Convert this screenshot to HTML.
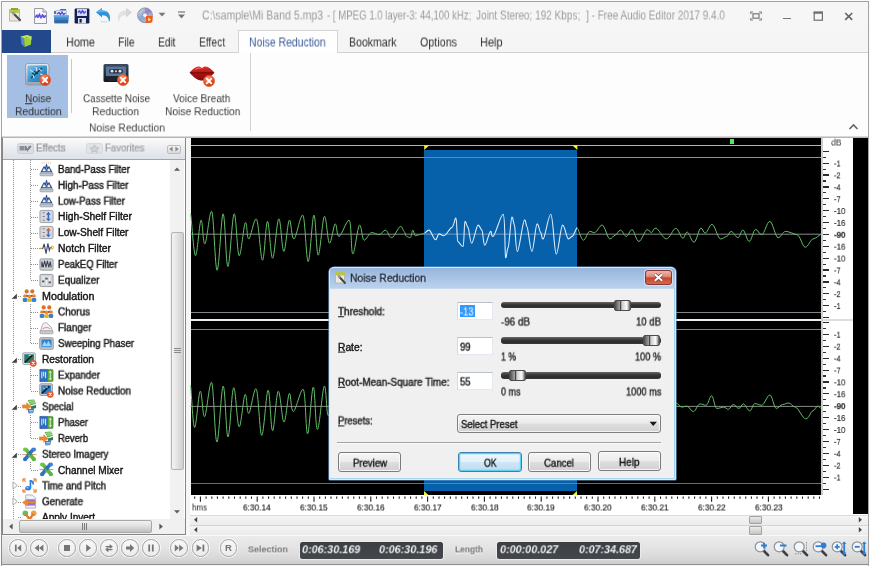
<!DOCTYPE html>
<html><head><meta charset="utf-8"><title>Free Audio Editor</title>
<style>
html,body{margin:0;padding:0;}
body{width:870px;height:566px;overflow:hidden;background:#fff;position:relative;font-family:"Liberation Sans",sans-serif;}
#root{position:absolute;left:0;top:0;width:870px;height:566px;overflow:hidden;}
#root div,#root span.t,#root svg{position:absolute;}
#root div{box-sizing:border-box;}
span.t{white-space:nowrap;transform-origin:0 50%;display:block;}
u{text-decoration:underline;text-underline-offset:1px;}
</style></head><body><div id="root">
<div style="left:0px;top:0px;width:870px;height:30px;background:#f6f6f6;"></div>
<div style="left:0px;top:30px;width:870px;height:23px;background:#f5f5f5;border-bottom:1px solid #d0d0d0;"></div>
<div style="left:0px;top:53px;width:870px;height:83px;background:#fdfdfd;"></div>
<div style="left:0px;top:135.6px;width:870px;height:2.4px;background:linear-gradient(#ececec,#c4c4c4 50%,#a8a8a8);z-index:3;"></div>
<div style="left:1px;top:1px;width:868px;height:566px;border:1px solid #a3a3a3;border-bottom:none;z-index:50;pointer-events:none;"></div>
<div style="left:869px;top:0px;width:1px;height:566px;background:#fbfbfb;z-index:51;"></div>
<div style="left:0px;top:0px;width:870px;height:1px;background:#fbfbfb;z-index:51;"></div>
<div style="left:0px;top:0px;width:1px;height:566px;background:#fbfbfb;z-index:51;"></div>
<svg style="left:7px;top:7px" width="16" height="16" viewBox="0 0 16 16">
<rect x="2.5" y="3" width="10" height="11" fill="#e9e6dc" stroke="#b9b7ae" stroke-width="1"/>
<rect x="2" y="2" width="11" height="4" rx="1" fill="#b9c84a"/>
<rect x="4" y="1" width="7" height="2" fill="#8aa838"/>
<path d="M6 6 L13 13" stroke="#4a4a55" stroke-width="2.2" stroke-linecap="round"/>
<path d="M5 5 L7.5 7.5" stroke="#9aa0a8" stroke-width="2"/>
</svg>
<svg style="left:33px;top:8px" width="15" height="16" viewBox="0 0 15 16">
<path d="M1.5 0.5 H10 L13.5 4 V15.5 H1.5 Z" fill="#f7f7f9" stroke="#9a9aa6" stroke-width="1"/>
<path d="M10 0.5 V4 H13.5" fill="#dcdce4" stroke="#9a9aa6" stroke-width="1"/>
<path d="M2.5 8 L4 6.5 L5 8.5 L6.5 5.5 L8 9 L9.5 6 L11 8.5 L12.5 7 L12.5 9 L11 10 L9.5 8.5 L8 10.5 L6.5 8 L5 10 L4 8.5 L2.5 9.5Z" fill="#4a48d8" stroke="#5a4fe0" stroke-width="0.8"/>
</svg>
<svg style="left:53px;top:8px" width="17" height="16" viewBox="0 0 17 16">
<path d="M1 3 H6 L7.5 1 H13 V6 H1Z" fill="#3d6ea8"/>
<rect x="3" y="2.5" width="10.5" height="7" fill="#e8eef8" stroke="#9ab0d0" stroke-width="0.6"/>
<path d="M4 6 L6 4.5 L7.5 6.5 L9 4 L10.5 6.5 L12.5 5" stroke="#4a48d8" stroke-width="1.3" fill="none"/>
<path d="M0.8 7.5 H16 L15 15.2 H1.5 Z" fill="#3f83c4"/>
<path d="M0.8 7.5 H16 L15.8 9.5 H1 Z" fill="#62a4dc"/>
<path d="M1.3 12 H15.4 L15 15.2 H1.5Z" fill="#2f6aa8"/>
</svg>
<svg style="left:74px;top:8px" width="16" height="16" viewBox="0 0 16 16">
<rect x="0.6" y="0.6" width="14.8" height="14.8" rx="1.2" fill="#16204e"/>
<rect x="3" y="1" width="10" height="7" fill="#cfd8f4"/>
<path d="M4 4.5 L5.5 3 L7 5 L8.5 2.8 L10 5 L12 3.5" stroke="#4a48d8" stroke-width="1.4" fill="none"/>
<rect x="4" y="10" width="8" height="5.4" fill="#dfe3ee"/>
<rect x="5.5" y="11" width="2.2" height="3.6" fill="#16204e"/>
</svg>
<svg style="left:95px;top:7px" width="17" height="16" viewBox="0 0 17 16">
<path d="M1 5.2 L7 1 V3.6 C12.5 3.2 15.5 7 15 12.5 C14.8 13.8 14.3 14.6 13.8 15 C14 11 12 8 7 8.2 V10.4 Z" fill="#2f93dc"/>
<path d="M1 5.2 L7 1 V3.6 C10 3.4 12.4 4.4 13.8 6.4 C11.5 5 9 5 7 5.2 Z" fill="#58b0ee"/>
<path d="M5.5 14.8 H12" stroke="#c9d3dd" stroke-width="1"/>
</svg>
<svg style="left:116px;top:7px" width="17" height="16" viewBox="0 0 17 16">
<path d="M16 5.2 L10 1 V3.6 C4.5 3.2 1.5 7 2 12.5 C2.2 13.8 2.7 14.6 3.2 15 C3 11 5 8 10 8.2 V10.4 Z" fill="#e1e1e1"/>
<path d="M16 5.2 L10 1 V3.6 L10 8.2 V10.4 Z" fill="#d6d6d6"/>
</svg>
<svg style="left:137px;top:7px" width="17" height="17" viewBox="0 0 17 17">
<defs><linearGradient id="cdg" x1="0" y1="0" x2="1" y2="1"><stop offset="0" stop-color="#dfe6f2"/><stop offset="0.45" stop-color="#8fa6c8"/><stop offset="1" stop-color="#c9b6d8"/></linearGradient></defs>
<circle cx="8" cy="8.3" r="7.4" fill="url(#cdg)" stroke="#6f86ac" stroke-width="0.8"/>
<path d="M8 8.3 L8 0.9 A7.4 7.4 0 0 1 14.6 5 Z" fill="#a77ab8" opacity="0.75"/>
<circle cx="8" cy="8.3" r="2.3" fill="#f4f6fa" stroke="#7f92b4" stroke-width="0.7"/>
<path d="M9 9 H15.6 V13 A3 3 0 0 1 12.6 16 H9 Z" fill="#e8601c"/>
<path d="M11.2 10.6 L14 12.5 L11.2 14.4Z" fill="#ffd9b8"/>
</svg>
<svg style="left:158px;top:12px" width="9" height="6"><path d="M0.5 0.8 H7.5 L4 4.6Z" fill="#777"/></svg>
<svg style="left:177px;top:11px" width="9" height="9"><path d="M1 1 H8" stroke="#777" stroke-width="1.2"/><path d="M1 3.6 H8 L4.5 7.4Z" fill="#777"/></svg>
<span class="t" style="left:202.00px;top:8px;font-size:12px;line-height:14px;color:#9c9c9c;transform:translateY(0.50px) scaleX(0.8764);will-change:transform;">C:\sample\Mi Band 5.mp3</span>
<span class="t" style="left:326.70px;top:8px;font-size:12px;line-height:14px;color:#9c9c9c;transform:translateY(0.50px) scaleX(0.8013);will-change:transform;">- [ MPEG 1.0 layer-3: 44,100 kHz;</span>
<span class="t" style="left:475.80px;top:8px;font-size:12px;line-height:14px;color:#9c9c9c;transform:translateY(0.50px) scaleX(0.8353);will-change:transform;">Joint Stereo; 192 Kbps;</span>
<span class="t" style="left:586.00px;top:8px;font-size:12px;line-height:14px;color:#9c9c9c;transform:translateY(0.50px) scaleX(0.8335);will-change:transform;">] - Free Audio Editor 2017 9.4.0</span>
<svg style="left:750px;top:10.5px" width="12" height="10" viewBox="0 0 12 10">
<rect x="3" y="2.8" width="6" height="4.4" fill="none" stroke="#808080" stroke-width="1.3"/>
<path d="M0.8 3 V1 H3 M9 1 H11.2 V3 M11.2 7 V9 H9 M3 9 H0.8 V7" fill="none" stroke="#808080" stroke-width="1.2"/>
</svg>
<div style="left:783px;top:17.5px;width:8.4px;height:1.7px;background:#787878;"></div>
<svg style="left:812.5px;top:10.5px" width="11" height="11"><rect x="1.2" y="1.2" width="8.2" height="8" fill="none" stroke="#707070" stroke-width="1.2"/><rect x="0.6" y="0.6" width="9.4" height="2.2" fill="#707070"/></svg>
<svg style="left:843.5px;top:11.5px" width="10" height="9"><path d="M1.2 1 L8.2 7.8 M8.2 1 L1.2 7.8" stroke="#666" stroke-width="1.7"/></svg>
<div style="left:1px;top:30px;width:50px;height:23px;background:#23488c;"></div>
<svg style="left:19px;top:34px" width="15" height="15" viewBox="0 0 15 15">
<path d="M1.5 2.5 L5 4.2 V12.5 L2.5 10 Z" fill="#4f8fd0"/>
<path d="M1.5 2.5 L8 1 L12.5 2.2 L5 4.2 Z" fill="#c7e66a"/>
<path d="M5 4.2 L12.5 2.2 L12 10.5 L5.5 13 Z" fill="#9fd23a"/>
<path d="M8.5 3.3 L12.5 2.2 L12.3 6 Z" fill="#c2e860"/>
</svg>
<span class="t" style="left:66.00px;top:35px;font-size:12px;line-height:14px;color:#2e2e2e;transform:translateY(0.50px) scaleX(0.9060);will-change:transform;">Home</span>
<span class="t" style="left:118.00px;top:35px;font-size:12px;line-height:14px;color:#2e2e2e;transform:translateY(0.50px) scaleX(0.8534);will-change:transform;">File</span>
<span class="t" style="left:158.00px;top:35px;font-size:12px;line-height:14px;color:#2e2e2e;transform:translateY(0.50px) scaleX(0.8463);will-change:transform;">Edit</span>
<span class="t" style="left:199.00px;top:35px;font-size:12px;line-height:14px;color:#2e2e2e;transform:translateY(0.50px) scaleX(0.8535);will-change:transform;">Effect</span>
<span class="t" style="left:349.00px;top:35px;font-size:12px;line-height:14px;color:#2e2e2e;transform:translateY(0.50px) scaleX(0.8793);will-change:transform;">Bookmark</span>
<span class="t" style="left:420.00px;top:35px;font-size:12px;line-height:14px;color:#2e2e2e;transform:translateY(0.50px) scaleX(0.8947);will-change:transform;">Options</span>
<span class="t" style="left:480.00px;top:35px;font-size:12px;line-height:14px;color:#2e2e2e;transform:translateY(0.50px) scaleX(0.9117);will-change:transform;">Help</span>
<div style="left:238px;top:30px;width:100px;height:23px;background:#fefefe;border:1px solid #d4d4d4;border-bottom:none;"></div>
<span class="t" style="left:249.00px;top:35px;font-size:12px;line-height:14px;color:#3a5c9a;transform:translateY(0.50px) scaleX(0.8689);will-change:transform;">Noise Reduction</span>
<div style="left:7px;top:55px;width:61.2px;height:63.3px;background:#a4bee4;"></div>
<div style="left:71px;top:59px;width:1px;height:54px;background:#c9c9c9;"></div>
<div style="left:250px;top:53px;width:1px;height:78px;background:#d2d2d2;"></div>
<svg style="left:24.2px;top:61.5px" width="27" height="25" viewBox="0 0 27 25">
<defs><linearGradient id="nrf" x1="0" y1="0" x2="0" y2="1"><stop offset="0" stop-color="#e6e9ec"/><stop offset="1" stop-color="#9aa3ad"/></linearGradient>
<linearGradient id="nri" x1="0" y1="0" x2="1" y2="1"><stop offset="0" stop-color="#7cc4ea"/><stop offset="0.5" stop-color="#3a96cf"/><stop offset="1" stop-color="#1f6fae"/></linearGradient></defs>
<rect x="1.5" y="1.5" width="23.5" height="21.5" rx="2.5" fill="url(#nrf)" stroke="#8d96a0" stroke-width="0.8"/>
<rect x="3.5" y="3.5" width="19.5" height="16.5" rx="1" fill="url(#nri)"/>
<path d="M7 16 L18 6" stroke="#1f3d55" stroke-width="1.6"/>
<path d="M6 8 L9 10 M12 5 L13 9 M16 12 L19 13 M9 13 L10 16 M15 7 L18 9" stroke="#d6ecf8" stroke-width="1"/>
<path d="M10 9 L14 12 M8 11 l2 1" stroke="#123" stroke-width="0.9"/>
</svg>
<svg style="left:37.8px;top:73.3px" width="14" height="14" viewBox="-7 -7 14 14">
<defs><radialGradient id="rg44" cx="0.4" cy="0.3" r="0.8"><stop offset="0" stop-color="#ff9a70"/><stop offset="0.6" stop-color="#e8491f"/><stop offset="1" stop-color="#c23612"/></radialGradient></defs>
<circle r="5.6" fill="url(#rg44)" stroke="#d8602f" stroke-width="0.6"/>
<path d="M-2.3 -2.3 L2.3 2.3 M2.3 -2.3 L-2.3 2.3" stroke="#fff" stroke-width="1.9" stroke-linecap="round"/>
</svg>
<svg style="left:103px;top:63px" width="26" height="20" viewBox="0 0 26 20">
<defs><linearGradient id="cs" x1="0" y1="0" x2="0" y2="1"><stop offset="0" stop-color="#3b4a5e"/><stop offset="1" stop-color="#10151d"/></linearGradient></defs>
<rect x="0.5" y="1" width="25" height="18" rx="1.5" fill="url(#cs)"/>
<rect x="3" y="3.5" width="20" height="9.5" fill="#5f7796"/>
<rect x="6" y="6" width="14" height="4.5" rx="2" fill="#2b3850"/>
<circle cx="9" cy="8.2" r="1.4" fill="#dfe8f2"/><circle cx="13" cy="8.2" r="1" fill="#cfd8e4"/><circle cx="17" cy="8.2" r="1.4" fill="#dfe8f2"/>
<rect x="5" y="15" width="16" height="3" fill="#1c2430"/>
</svg>
<svg style="left:116.2px;top:72.9px" width="14" height="14" viewBox="-7 -7 14 14">
<defs><radialGradient id="rg123" cx="0.4" cy="0.3" r="0.8"><stop offset="0" stop-color="#ff9a70"/><stop offset="0.6" stop-color="#e8491f"/><stop offset="1" stop-color="#c23612"/></radialGradient></defs>
<circle r="5.6" fill="url(#rg123)" stroke="#d8602f" stroke-width="0.6"/>
<path d="M-2.3 -2.3 L2.3 2.3 M2.3 -2.3 L-2.3 2.3" stroke="#fff" stroke-width="1.9" stroke-linecap="round"/>
</svg>
<svg style="left:189px;top:65px" width="26" height="17" viewBox="0 0 26 17">
<defs><linearGradient id="lp" x1="0" y1="0" x2="0" y2="1"><stop offset="0" stop-color="#e0362c"/><stop offset="0.5" stop-color="#b01212"/><stop offset="1" stop-color="#7c0a0a"/></linearGradient></defs>
<path d="M0.5 7.5 C4 4 7 1 10 1.5 C11.5 1.8 12.3 2.8 13 3.2 C13.7 2.8 14.5 1.8 16 1.5 C19 1 22 4 25.5 7.5 C21 13 17 15.5 13 15.5 C9 15.5 5 13 0.5 7.5Z" fill="url(#lp)"/>
<path d="M1.5 7.6 C6 8.6 10 7.4 13 8 C16 7.4 20 8.6 24.5 7.6" stroke="#5a0606" stroke-width="1" fill="none"/>
<path d="M6 4.5 C8 3 10 2.8 11.5 3.5" stroke="#ff8a80" stroke-width="1" fill="none" opacity="0.8"/>
</svg>
<svg style="left:201.6px;top:73.5px" width="14" height="14" viewBox="-7 -7 14 14">
<defs><radialGradient id="rg208" cx="0.4" cy="0.3" r="0.8"><stop offset="0" stop-color="#ff9a70"/><stop offset="0.6" stop-color="#e8491f"/><stop offset="1" stop-color="#c23612"/></radialGradient></defs>
<circle r="5.6" fill="url(#rg208)" stroke="#d8602f" stroke-width="0.6"/>
<path d="M-2.3 -2.3 L2.3 2.3 M2.3 -2.3 L-2.3 2.3" stroke="#fff" stroke-width="1.9" stroke-linecap="round"/>
</svg>
<span class="t" style="left:24.90px;top:92px;font-size:11.5px;line-height:13.5px;color:#303030;transform:translateY(0.25px) scaleX(0.8912);will-change:transform;"><u>N</u>oise</span>
<span class="t" style="left:14.70px;top:105px;font-size:11.5px;line-height:13.5px;color:#303030;transform:translateY(0.25px) scaleX(0.8980);will-change:transform;">Reduction</span>
<span class="t" style="left:82.80px;top:92px;font-size:11.5px;line-height:13.5px;color:#3c3c3c;transform:translateY(0.25px) scaleX(0.8618);will-change:transform;">Cassette Noise</span>
<span class="t" style="left:92.30px;top:105px;font-size:11.5px;line-height:13.5px;color:#3c3c3c;transform:translateY(0.25px) scaleX(0.9077);will-change:transform;">Reduction</span>
<span class="t" style="left:173.00px;top:92px;font-size:11.5px;line-height:13.5px;color:#3c3c3c;transform:translateY(0.25px) scaleX(0.8803);will-change:transform;">Voice Breath</span>
<span class="t" style="left:164.60px;top:105px;font-size:11.5px;line-height:13.5px;color:#3c3c3c;transform:translateY(0.25px) scaleX(0.8936);will-change:transform;">Noise Reduction</span>
<span class="t" style="left:88.60px;top:121px;font-size:11.5px;line-height:13.5px;color:#444444;transform:translateY(0.45px) scaleX(0.9007);will-change:transform;">Noise Reduction</span>
<svg style="left:848px;top:123px" width="11" height="8"><path d="M1.5 6 L5.5 2 L9.5 6" stroke="#666" stroke-width="1.6" fill="none"/></svg>
<div style="left:0px;top:137px;width:191px;height:400px;background:#f6f6f6;"></div>
<div style="left:2px;top:137px;width:184px;height:398px;background:#fff;border:1px solid #868686;border-top-color:#a2a2a2;"></div>
<div style="left:3px;top:138px;width:182px;height:22px;background:linear-gradient(#fbfbfc,#eceef2 45%,#dde1e8);border-bottom:1px solid #a4a4a4;"></div>
<svg style="left:17px;top:143px" width="17" height="11" viewBox="0 0 17 11">
<rect x="0.5" y="0.5" width="16" height="10" rx="2" fill="#dadde2" stroke="#c6c9cf" stroke-width="0.8"/>
<rect x="2.5" y="3" width="5" height="4.5" fill="#8d9197"/>
<path d="M8.5 7.5 V3 L10.5 7.5 L12.5 3 V5 L14 3" stroke="#7d8188" stroke-width="1.3" fill="none"/>
</svg>
<span class="t" style="left:35.50px;top:142px;font-size:10px;line-height:12px;color:#8e8e8e;transform:translateY(0.50px) scaleX(0.9709);will-change:transform;-webkit-text-stroke:0.2px #8e8e8e;">Effects</span>
<svg style="left:86px;top:143px" width="17" height="11" viewBox="0 0 17 11">
<rect x="0.5" y="0.5" width="16" height="10" rx="2" fill="#e1e3e7" stroke="#d2d4d9" stroke-width="0.8"/>
<path d="M8.5 1.8 L10 4.6 L13 5 L10.8 7 L11.4 9.6 L8.5 8.2 L5.6 9.6 L6.2 7 L4 5 L7 4.6Z" fill="#cfd2d7" stroke="#b4b7bd" stroke-width="0.7"/>
</svg>
<span class="t" style="left:104.50px;top:142px;font-size:10px;line-height:12px;color:#9c9c9c;transform:translateY(0.50px) scaleX(0.9606);will-change:transform;-webkit-text-stroke:0.2px #9c9c9c;">Favorites</span>
<div style="left:167px;top:144.5px;width:14px;height:9px;background:linear-gradient(#f4f4f4,#d9d9d9);border:1px solid #bdbdbd;border-radius:2px;"></div>
<svg style="left:168px;top:146px" width="12" height="6"><path d="M4.6 0.4 V5.6 L1.2 3Z M7.4 0.4 V5.6 L10.8 3Z" fill="#8a8a8a"/></svg>
<div style="left:170px;top:160px;width:14px;height:359px;background:#f1f1f1;"></div>
<svg style="left:173px;top:166px" width="8" height="6"><path d="M1 4.8 H7 L4 1.4Z" fill="#5c5c5c"/></svg>
<svg style="left:173px;top:509px" width="8" height="6"><path d="M1 1.2 H7 L4 4.6Z" fill="#5c5c5c"/></svg>
<div style="left:171px;top:232px;width:13px;height:238px;background:linear-gradient(90deg,#f4f4f4,#e2e2e2 50%,#cfcfcf);border:1px solid #b3b3b3;border-radius:2px;"></div>
<div style="left:174px;top:348px;width:7px;height:1px;background:#8a8a8a;"></div>
<div style="left:174px;top:350px;width:7px;height:1px;background:#8a8a8a;"></div>
<div style="left:174px;top:352px;width:7px;height:1px;background:#8a8a8a;"></div>
<div style="left:3px;top:160px;width:167px;height:359px;overflow:hidden;">
<div style="left:10px;top:0px;width:1px;height:132px;background:repeating-linear-gradient(#909090 0,#909090 1px,transparent 1px,transparent 2px);"></div>
<div style="left:10px;top:141px;width:1px;height:54px;background:repeating-linear-gradient(#909090 0,#909090 1px,transparent 1px,transparent 2px);"></div>
<div style="left:10px;top:204px;width:1px;height:38px;background:repeating-linear-gradient(#909090 0,#909090 1px,transparent 1px,transparent 2px);"></div>
<div style="left:10px;top:251px;width:1px;height:39px;background:repeating-linear-gradient(#909090 0,#909090 1px,transparent 1px,transparent 2px);"></div>
<div style="left:10px;top:299px;width:1px;height:22px;background:repeating-linear-gradient(#909090 0,#909090 1px,transparent 1px,transparent 2px);"></div>
<div style="left:10px;top:330px;width:1px;height:7px;background:repeating-linear-gradient(#909090 0,#909090 1px,transparent 1px,transparent 2px);"></div>
<div style="left:10px;top:346px;width:1px;height:14px;background:repeating-linear-gradient(#909090 0,#909090 1px,transparent 1px,transparent 2px);"></div>
<div style="left:27px;top:0px;width:1px;height:120.04000000000002px;background:repeating-linear-gradient(#909090 0,#909090 1px,transparent 1px,transparent 2px);"></div>
<div style="left:27px;top:143.86px;width:1px;height:39.460000000000036px;background:repeating-linear-gradient(#909090 0,#909090 1px,transparent 1px,transparent 2px);"></div>
<div style="left:27px;top:207.14px;width:1px;height:23.640000000000043px;background:repeating-linear-gradient(#909090 0,#909090 1px,transparent 1px,transparent 2px);"></div>
<div style="left:27px;top:254.60000000000002px;width:1px;height:23.639999999999986px;background:repeating-linear-gradient(#909090 0,#909090 1px,transparent 1px,transparent 2px);"></div>
<div style="left:27px;top:302.06px;width:1px;height:7.819999999999993px;background:repeating-linear-gradient(#909090 0,#909090 1px,transparent 1px,transparent 2px);"></div>
<div style="left:28px;top:9px;width:8px;height:1px;background:repeating-linear-gradient(90deg,#909090 0,#909090 1px,transparent 1px,transparent 2px);"></div>
<svg style="left:36.0px;top:1.8px" width="15" height="15" viewBox="0 0 16 16"><path d="M1 13 L3 9 H13 L15 13 Z" fill="#dcdee2" stroke="#8f939a" stroke-width="0.8"/>
<rect x="1" y="12" width="14" height="2.8" rx="1.2" fill="#c3c6cc" stroke="#8f939a" stroke-width="0.6"/>
<path d="M2.6 10.4 L5.4 5 L6.8 7.6 L8 2.6 L9.2 7.6 L10.6 5 L13.4 10.4 Z" fill="#f2f5fa" stroke="#2f4c86" stroke-width="1.15" stroke-linejoin="round"/>
<path d="M6.4 10 L8 6.2 L9.6 10Z" fill="#4a74ba"/><path d="M3 1 H13" stroke="#e8a070" stroke-width="0.8" stroke-dasharray="1.2 1"/></svg>
<span class="t" style="left:55.00px;top:4px;font-size:10px;line-height:12px;color:#161616;transform:translateY(0.00px) scaleX(0.9741);will-change:transform;-webkit-text-stroke:0.4px #161616;">Band-Pass Filter</span>
<div style="left:28px;top:25px;width:8px;height:1px;background:repeating-linear-gradient(90deg,#909090 0,#909090 1px,transparent 1px,transparent 2px);"></div>
<svg style="left:36.0px;top:17.6px" width="15" height="15" viewBox="0 0 16 16"><path d="M1 13 L3 9 H13 L15 13 Z" fill="#dcdee2" stroke="#8f939a" stroke-width="0.8"/>
<rect x="1" y="12" width="14" height="2.8" rx="1.2" fill="#c3c6cc" stroke="#8f939a" stroke-width="0.6"/>
<path d="M2.6 10.4 L5.4 5 L6.8 7.6 L8 2.6 L9.2 7.6 L10.6 5 L13.4 10.4 Z" fill="#f2f5fa" stroke="#2f4c86" stroke-width="1.15" stroke-linejoin="round"/>
<path d="M6.4 10 L8 6.2 L9.6 10Z" fill="#4a74ba"/></svg>
<span class="t" style="left:55.00px;top:19px;font-size:10px;line-height:12px;color:#161616;transform:translateY(0.82px) scaleX(0.9912);will-change:transform;-webkit-text-stroke:0.4px #161616;">High-Pass Filter</span>
<div style="left:28px;top:41px;width:8px;height:1px;background:repeating-linear-gradient(90deg,#909090 0,#909090 1px,transparent 1px,transparent 2px);"></div>
<svg style="left:36.0px;top:33.4px" width="15" height="15" viewBox="0 0 16 16"><path d="M1 13 L3 9 H13 L15 13 Z" fill="#dcdee2" stroke="#8f939a" stroke-width="0.8"/>
<rect x="1" y="12" width="14" height="2.8" rx="1.2" fill="#c3c6cc" stroke="#8f939a" stroke-width="0.6"/>
<path d="M2.6 10.4 L5.4 5 L6.8 7.6 L8 2.6 L9.2 7.6 L10.6 5 L13.4 10.4 Z" fill="#f2f5fa" stroke="#2f4c86" stroke-width="1.15" stroke-linejoin="round"/>
<path d="M6.4 10 L8 6.2 L9.6 10Z" fill="#4a74ba"/></svg>
<span class="t" style="left:55.00px;top:35px;font-size:10px;line-height:12px;color:#161616;transform:translateY(0.64px) scaleX(0.9724);will-change:transform;-webkit-text-stroke:0.4px #161616;">Low-Pass Filter</span>
<div style="left:28px;top:57px;width:8px;height:1px;background:repeating-linear-gradient(90deg,#909090 0,#909090 1px,transparent 1px,transparent 2px);"></div>
<svg style="left:36.0px;top:49.3px" width="15" height="15" viewBox="0 0 16 16"><rect x="1" y="1.5" width="14" height="13" rx="1.5" fill="#d7d9dd" stroke="#90949b" stroke-width="0.9"/>
<path d="M4 4 H6 M4 8 H6 M4 12 H6" stroke="#6c7078" stroke-width="1"/>
<path d="M10 3 L12.5 6 H7.5Z" fill="#2b62c4"/><path d="M10 13 L12.5 10 H7.5Z" fill="#2b62c4"/><rect x="9.2" y="6" width="1.6" height="4" fill="#2b62c4"/></svg>
<span class="t" style="left:55.00px;top:51px;font-size:10px;line-height:12px;color:#161616;transform:translateY(0.46px) scaleX(1.0323);will-change:transform;-webkit-text-stroke:0.4px #161616;">High-Shelf Filter</span>
<div style="left:28px;top:73px;width:8px;height:1px;background:repeating-linear-gradient(90deg,#909090 0,#909090 1px,transparent 1px,transparent 2px);"></div>
<svg style="left:36.0px;top:65.1px" width="15" height="15" viewBox="0 0 16 16"><rect x="1" y="1.5" width="14" height="13" rx="1.5" fill="#d7d9dd" stroke="#90949b" stroke-width="0.9"/>
<path d="M4 4 H6 M4 8 H6 M4 12 H6" stroke="#6c7078" stroke-width="1"/>
<path d="M10 3 L12.5 6 H7.5Z" fill="#d85a28"/><path d="M10 13 L12.5 10 H7.5Z" fill="#2b62c4"/><rect x="9.2" y="6" width="1.6" height="4" fill="#4d6fb0"/></svg>
<span class="t" style="left:55.00px;top:67px;font-size:10px;line-height:12px;color:#161616;transform:translateY(0.28px) scaleX(1.0149);will-change:transform;-webkit-text-stroke:0.4px #161616;">Low-Shelf Filter</span>
<div style="left:28px;top:88px;width:8px;height:1px;background:repeating-linear-gradient(90deg,#909090 0,#909090 1px,transparent 1px,transparent 2px);"></div>
<svg style="left:36.0px;top:80.9px" width="15" height="15" viewBox="0 0 16 16"><path d="M0.5 8 H4 L5.5 3 L7.5 13.5 L9.5 2.5 L11 10 L12 7 H13.5" stroke="#3a4c6e" stroke-width="1.2" fill="none"/>
<path d="M0.5 8 H3.5" stroke="#d9a21c" stroke-width="1.4"/><circle cx="14" cy="7" r="1.5" fill="none" stroke="#d9a21c" stroke-width="1"/></svg>
<span class="t" style="left:55.00px;top:83px;font-size:10px;line-height:12px;color:#161616;transform:translateY(0.10px) scaleX(1.0368);will-change:transform;-webkit-text-stroke:0.4px #161616;">Notch Filter</span>
<div style="left:28px;top:104px;width:8px;height:1px;background:repeating-linear-gradient(90deg,#909090 0,#909090 1px,transparent 1px,transparent 2px);"></div>
<svg style="left:36.0px;top:96.7px" width="15" height="15" viewBox="0 0 16 16"><rect x="1" y="2" width="14" height="12" rx="1.5" fill="#cfd2d6" stroke="#8b8f96" stroke-width="0.9"/>
<path d="M3 11 V5 L4.5 11 L6 4 L7.5 11 L9 4 L10.5 11 L12 5 L13 11" stroke="#3a4250" stroke-width="1.1" fill="none"/></svg>
<span class="t" style="left:55.00px;top:98px;font-size:10px;line-height:12px;color:#161616;transform:translateY(0.92px) scaleX(0.9560);will-change:transform;-webkit-text-stroke:0.4px #161616;">PeakEQ Filter</span>
<div style="left:28px;top:120px;width:8px;height:1px;background:repeating-linear-gradient(90deg,#909090 0,#909090 1px,transparent 1px,transparent 2px);"></div>
<svg style="left:36.0px;top:112.5px" width="15" height="15" viewBox="0 0 16 16"><rect x="1" y="1.5" width="14" height="13" rx="1.5" fill="#d3d5d9" stroke="#8b8f96" stroke-width="0.9"/>
<path d="M4.5 3.5 V12.5 M8 3.5 V12.5 M11.5 3.5 V12.5" stroke="#f4f4f4" stroke-width="1.2"/>
<rect x="3.3" y="8" width="2.4" height="2" fill="#50555e"/><rect x="6.8" y="5" width="2.4" height="2" fill="#50555e"/><rect x="10.3" y="9" width="2.4" height="2" fill="#50555e"/></svg>
<span class="t" style="left:55.00px;top:114px;font-size:10px;line-height:12px;color:#161616;transform:translateY(0.74px) scaleX(0.9955);will-change:transform;-webkit-text-stroke:0.4px #161616;">Equalizer</span>
<div style="left:15px;top:136px;width:4px;height:1px;background:repeating-linear-gradient(90deg,#909090 0,#909090 1px,transparent 1px,transparent 2px);"></div>
<svg style="left:19.0px;top:128.4px" width="15" height="15" viewBox="0 0 16 16"><circle cx="5" cy="3.6" r="2.2" fill="#d8732c"/><circle cx="11" cy="3.6" r="2.2" fill="#d8732c"/>
<path d="M1.5 9.5 C1.5 6.5 8.5 6.5 8.5 9.5Z" fill="#c0392b"/><path d="M7.5 9.5 C7.5 6.5 14.5 6.5 14.5 9.5Z" fill="#c0392b"/>
<circle cx="3.2" cy="8.6" r="1.9" fill="#e58a3a"/><circle cx="8" cy="8.8" r="2" fill="#e58a3a"/><circle cx="12.8" cy="8.6" r="1.9" fill="#e58a3a"/>
<rect x="0.8" y="10.6" width="4.8" height="4.2" rx="1.2" fill="#3f7fc8"/><rect x="5.6" y="10.8" width="4.8" height="4.2" rx="1.2" fill="#e2b42c"/><rect x="10.4" y="10.6" width="4.8" height="4.2" rx="1.2" fill="#3f7fc8"/></svg>
<svg style="left:8.0px;top:133.4px" width="7" height="7"><path d="M5.6 1.2 V5.6 H1.2Z" fill="#404040" stroke="#2a2a2a" stroke-width="0.5"/></svg>
<span class="t" style="left:38.50px;top:130px;font-size:10px;line-height:12px;color:#161616;transform:translateY(0.56px) scaleX(1.0732);will-change:transform;-webkit-text-stroke:0.4px #161616;">Modulation</span>
<div style="left:28px;top:152px;width:8px;height:1px;background:repeating-linear-gradient(90deg,#909090 0,#909090 1px,transparent 1px,transparent 2px);"></div>
<svg style="left:36.0px;top:144.2px" width="15" height="15" viewBox="0 0 16 16"><circle cx="5" cy="3.6" r="2.2" fill="#d8732c"/><circle cx="11" cy="3.6" r="2.2" fill="#d8732c"/>
<path d="M1.5 9.5 C1.5 6.5 8.5 6.5 8.5 9.5Z" fill="#c0392b"/><path d="M7.5 9.5 C7.5 6.5 14.5 6.5 14.5 9.5Z" fill="#c0392b"/>
<circle cx="3.2" cy="8.6" r="1.9" fill="#e58a3a"/><circle cx="8" cy="8.8" r="2" fill="#e58a3a"/><circle cx="12.8" cy="8.6" r="1.9" fill="#e58a3a"/>
<rect x="0.8" y="10.6" width="4.8" height="4.2" rx="1.2" fill="#3f7fc8"/><rect x="5.6" y="10.8" width="4.8" height="4.2" rx="1.2" fill="#e2b42c"/><rect x="10.4" y="10.6" width="4.8" height="4.2" rx="1.2" fill="#3f7fc8"/></svg>
<span class="t" style="left:55.00px;top:146px;font-size:10px;line-height:12px;color:#161616;transform:translateY(0.38px) scaleX(0.9927);will-change:transform;-webkit-text-stroke:0.4px #161616;">Chorus</span>
<div style="left:28px;top:168px;width:8px;height:1px;background:repeating-linear-gradient(90deg,#909090 0,#909090 1px,transparent 1px,transparent 2px);"></div>
<svg style="left:36.0px;top:160.0px" width="15" height="15" viewBox="0 0 16 16"><path d="M1.5 12 L3 7.5 C4 2 8 1.5 10 5 L13 7.5 L14.5 12Z" fill="#f4eef0" stroke="#9aa0aa" stroke-width="0.9"/>
<path d="M4 9.5 C6 7.5 10 7.5 12 9.5" stroke="#e48a8a" stroke-width="1.1" fill="none"/>
<rect x="1" y="11.5" width="14" height="3.2" rx="1.2" fill="#c9ccd2" stroke="#8f939a" stroke-width="0.7"/></svg>
<span class="t" style="left:55.00px;top:162px;font-size:10px;line-height:12px;color:#161616;transform:translateY(0.20px) scaleX(0.9881);will-change:transform;-webkit-text-stroke:0.4px #161616;">Flanger</span>
<div style="left:28px;top:183px;width:8px;height:1px;background:repeating-linear-gradient(90deg,#909090 0,#909090 1px,transparent 1px,transparent 2px);"></div>
<svg style="left:36.0px;top:175.8px" width="15" height="15" viewBox="0 0 16 16"><rect x="0.8" y="1.8" width="14.4" height="12.4" rx="1.5" fill="#c8ccd2" stroke="#878c94" stroke-width="0.9"/>
<rect x="2.6" y="3.6" width="10.8" height="8.4" fill="#2f86d6"/>
<path d="M3 11 L6 5.5 L8 9 L10 5 L13 11Z" fill="#a8d4f6"/></svg>
<span class="t" style="left:55.00px;top:178px;font-size:10px;line-height:12px;color:#161616;transform:translateY(0.02px) scaleX(0.9696);will-change:transform;-webkit-text-stroke:0.4px #161616;">Sweeping Phaser</span>
<div style="left:15px;top:199px;width:4px;height:1px;background:repeating-linear-gradient(90deg,#909090 0,#909090 1px,transparent 1px,transparent 2px);"></div>
<svg style="left:19.0px;top:191.6px" width="15" height="15" viewBox="0 0 16 16"><rect x="0.8" y="0.8" width="13.5" height="12.5" rx="1.2" fill="#dfe2e6" stroke="#9aa0a8" stroke-width="0.9"/>
<rect x="2.4" y="2.4" width="10.3" height="9.3" fill="#2e7a6a"/>
<path d="M3 11 L11 3.5" stroke="#13202c" stroke-width="1.8"/><path d="M7 4 l3 -1" stroke="#bfe6de" stroke-width="1"/>
<circle cx="12" cy="12" r="3.6" fill="#e4562a"/><path d="M10.6 10.6 L13.4 13.4 M13.4 10.6 L10.6 13.4" stroke="#fff" stroke-width="1.2"/></svg>
<svg style="left:8.0px;top:196.6px" width="7" height="7"><path d="M5.6 1.2 V5.6 H1.2Z" fill="#404040" stroke="#2a2a2a" stroke-width="0.5"/></svg>
<span class="t" style="left:38.50px;top:193px;font-size:10px;line-height:12px;color:#161616;transform:translateY(0.84px) scaleX(1.0169);will-change:transform;-webkit-text-stroke:0.4px #161616;">Restoration</span>
<div style="left:28px;top:215px;width:8px;height:1px;background:repeating-linear-gradient(90deg,#909090 0,#909090 1px,transparent 1px,transparent 2px);"></div>
<svg style="left:36.0px;top:207.5px" width="15" height="15" viewBox="0 0 16 16"><rect x="1" y="1.5" width="9" height="13" rx="1.2" fill="#2a6fc0" stroke="#3d5fb0" stroke-width="0.9"/>
<rect x="9" y="1.5" width="6" height="13" rx="1.5" fill="#58a83a" stroke="#3f8a2a" stroke-width="0.7"/>
<path d="M3 4 V11 M5 4 V9 M7 4 V11" stroke="#cfe6fa" stroke-width="1.2"/>
<path d="M12 3.5 V12.5 M10.8 5 L12 3.5 L13.2 5 M10.8 11 L12 12.5 L13.2 11" stroke="#e9f8dc" stroke-width="1" fill="none"/>
<circle cx="1.5" cy="2" r="1" fill="#3d5fb0"/><circle cx="1.5" cy="14" r="1" fill="#3d5fb0"/></svg>
<span class="t" style="left:55.00px;top:209px;font-size:10px;line-height:12px;color:#161616;transform:translateY(0.66px) scaleX(0.9812);will-change:transform;-webkit-text-stroke:0.4px #161616;">Expander</span>
<div style="left:28px;top:231px;width:8px;height:1px;background:repeating-linear-gradient(90deg,#909090 0,#909090 1px,transparent 1px,transparent 2px);"></div>
<svg style="left:36.0px;top:223.3px" width="15" height="15" viewBox="0 0 16 16"><rect x="0.8" y="0.8" width="13.5" height="12.5" rx="1.2" fill="#c9cdd3" stroke="#8a9098" stroke-width="0.9"/>
<rect x="2.4" y="2.4" width="10.3" height="9.3" fill="#2f7fc4"/>
<path d="M3 11 L11 3.5" stroke="#13202c" stroke-width="1.8"/><path d="M4 5 l2 1 M8 3.5 l1 2" stroke="#d8ecfa" stroke-width="0.9"/>
<circle cx="12" cy="12" r="3.6" fill="#e4562a"/><path d="M10.6 10.6 L13.4 13.4 M13.4 10.6 L10.6 13.4" stroke="#fff" stroke-width="1.2"/></svg>
<span class="t" style="left:55.00px;top:225px;font-size:10px;line-height:12px;color:#161616;transform:translateY(0.48px) scaleX(0.9950);will-change:transform;-webkit-text-stroke:0.4px #161616;">Noise Reduction</span>
<div style="left:15px;top:247px;width:4px;height:1px;background:repeating-linear-gradient(90deg,#909090 0,#909090 1px,transparent 1px,transparent 2px);"></div>
<svg style="left:19.0px;top:239.1px" width="15" height="15" viewBox="0 0 16 16"><path d="M6 1 L13 0.5 L15 5 L9 7Z" fill="#62b04a"/><path d="M7.5 2.5 L13.5 2 M8 4.5 L14 4" stroke="#d6f0c8" stroke-width="0.8"/>
<path d="M9 8 L15 6.5 L15 9.5 L10 11Z" fill="#2f7a5c"/>
<path d="M6 11 L13 10 L12 15 L7 15.5Z" fill="#3f74c4"/><path d="M7.5 12.5 L12 12 M7.8 14 L11.5 13.6" stroke="#cfe0f6" stroke-width="0.8"/>
<path d="M0.5 6.3 H5 V4 L9.5 8 L5 12 V9.7 H0.5Z" fill="#ee8a2c" stroke="#d66e14" stroke-width="0.5"/></svg>
<svg style="left:8.0px;top:244.1px" width="7" height="7"><path d="M5.6 1.2 V5.6 H1.2Z" fill="#404040" stroke="#2a2a2a" stroke-width="0.5"/></svg>
<span class="t" style="left:38.50px;top:241px;font-size:10px;line-height:12px;color:#161616;transform:translateY(0.30px) scaleX(0.9605);will-change:transform;-webkit-text-stroke:0.4px #161616;">Special</span>
<div style="left:28px;top:262px;width:8px;height:1px;background:repeating-linear-gradient(90deg,#909090 0,#909090 1px,transparent 1px,transparent 2px);"></div>
<svg style="left:36.0px;top:254.9px" width="15" height="15" viewBox="0 0 16 16"><rect x="1" y="1.5" width="9" height="13" rx="1.2" fill="#2a6fc0" stroke="#3d5fb0" stroke-width="0.9"/>
<rect x="9" y="1.5" width="6" height="13" rx="1.5" fill="#58a83a" stroke="#3f8a2a" stroke-width="0.7"/>
<path d="M3 4 V11 M5 4 V9 M7 4 V11" stroke="#cfe6fa" stroke-width="1.2"/>
<path d="M12 3.5 V12.5 M10.8 5 L12 3.5 L13.2 5 M10.8 11 L12 12.5 L13.2 11" stroke="#e9f8dc" stroke-width="1" fill="none"/>
<circle cx="1.5" cy="2" r="1" fill="#3d5fb0"/><circle cx="1.5" cy="14" r="1" fill="#3d5fb0"/></svg>
<span class="t" style="left:55.00px;top:257px;font-size:10px;line-height:12px;color:#161616;transform:translateY(0.12px) scaleX(0.9469);will-change:transform;-webkit-text-stroke:0.4px #161616;">Phaser</span>
<div style="left:28px;top:278px;width:8px;height:1px;background:repeating-linear-gradient(90deg,#909090 0,#909090 1px,transparent 1px,transparent 2px);"></div>
<svg style="left:36.0px;top:270.7px" width="15" height="15" viewBox="0 0 16 16"><path d="M6 1 L13 0.5 L15 5 L9 7Z" fill="#62b04a"/><path d="M7.5 2.5 L13.5 2 M8 4.5 L14 4" stroke="#d6f0c8" stroke-width="0.8"/>
<path d="M9 8 L15 6.5 L15 9.5 L10 11Z" fill="#2f7a5c"/>
<path d="M6 11 L13 10 L12 15 L7 15.5Z" fill="#3f74c4"/><path d="M7.5 12.5 L12 12 M7.8 14 L11.5 13.6" stroke="#cfe0f6" stroke-width="0.8"/>
<path d="M0.5 6.3 H5 V4 L9.5 8 L5 12 V9.7 H0.5Z" fill="#ee8a2c" stroke="#d66e14" stroke-width="0.5"/></svg>
<span class="t" style="left:55.00px;top:272px;font-size:10px;line-height:12px;color:#161616;transform:translateY(0.94px) scaleX(0.9307);will-change:transform;-webkit-text-stroke:0.4px #161616;">Reverb</span>
<div style="left:15px;top:294px;width:4px;height:1px;background:repeating-linear-gradient(90deg,#909090 0,#909090 1px,transparent 1px,transparent 2px);"></div>
<svg style="left:19.0px;top:286.6px" width="15" height="15" viewBox="0 0 16 16"><path d="M0.5 8 H15.5" stroke="#e8956a" stroke-width="1"/>
<path d="M2 2.5 L5 1 L14 12 L11.5 14.5Z" fill="#5cb83c" stroke="#3f962a" stroke-width="0.5"/>
<path d="M14 2.5 L11 1 L2 12 L4.5 14.5Z" fill="#2f6fc8" stroke="#2458a8" stroke-width="0.5"/>
<path d="M6.5 6.5 L8 8 L9.5 9.8 L8 11.5 L6.5 9.5Z" fill="#5cb83c"/>
<circle cx="3.2" cy="2.6" r="2.1" fill="#6cc848"/><circle cx="12.8" cy="2.6" r="2.1" fill="#3a80d8"/><circle cx="3.2" cy="13" r="2.1" fill="#2f6fc8"/><circle cx="12.8" cy="13" r="2.1" fill="#5cb83c"/></svg>
<svg style="left:8.0px;top:291.6px" width="7" height="7"><path d="M5.6 1.2 V5.6 H1.2Z" fill="#404040" stroke="#2a2a2a" stroke-width="0.5"/></svg>
<span class="t" style="left:38.50px;top:288px;font-size:10px;line-height:12px;color:#161616;transform:translateY(0.76px) scaleX(0.9728);will-change:transform;-webkit-text-stroke:0.4px #161616;">Stereo Imagery</span>
<div style="left:28px;top:310px;width:8px;height:1px;background:repeating-linear-gradient(90deg,#909090 0,#909090 1px,transparent 1px,transparent 2px);"></div>
<svg style="left:36.0px;top:302.4px" width="15" height="15" viewBox="0 0 16 16"><path d="M0.5 8 H15.5" stroke="#e8956a" stroke-width="1"/>
<path d="M2 2.5 L5 1 L14 12 L11.5 14.5Z" fill="#5cb83c" stroke="#3f962a" stroke-width="0.5"/>
<path d="M14 2.5 L11 1 L2 12 L4.5 14.5Z" fill="#2f6fc8" stroke="#2458a8" stroke-width="0.5"/>
<path d="M6.5 6.5 L8 8 L9.5 9.8 L8 11.5 L6.5 9.5Z" fill="#5cb83c"/>
<circle cx="3.2" cy="2.6" r="2.1" fill="#6cc848"/><circle cx="12.8" cy="2.6" r="2.1" fill="#3a80d8"/><circle cx="3.2" cy="13" r="2.1" fill="#2f6fc8"/><circle cx="12.8" cy="13" r="2.1" fill="#5cb83c"/></svg>
<span class="t" style="left:55.00px;top:304px;font-size:10px;line-height:12px;color:#161616;transform:translateY(0.58px) scaleX(1.0082);will-change:transform;-webkit-text-stroke:0.4px #161616;">Channel Mixer</span>
<div style="left:15px;top:326px;width:4px;height:1px;background:repeating-linear-gradient(90deg,#909090 0,#909090 1px,transparent 1px,transparent 2px);"></div>
<svg style="left:19.0px;top:318.2px" width="15" height="15" viewBox="0 0 16 16"><path d="M1 1 H4 M1 1 V4 M15 1 H12 M15 1 V4 M1 15 H4 M1 15 V12 M15 15 H12 M15 15 V12" stroke="#f0934a" stroke-width="1.6" fill="none"/>
<path d="M1 1 L4 4 M15 1 L12 4 M1 15 L4 12 M15 15 L12 12" stroke="#f0934a" stroke-width="1.2"/>
<ellipse cx="6.5" cy="11" rx="3" ry="2.4" fill="#2c7fd8"/><path d="M9 11 V3 C11 3 12 5 12 7" stroke="#2c7fd8" stroke-width="1.8" fill="none"/>
<ellipse cx="6" cy="10.4" rx="1.2" ry="0.8" fill="#9ccaf4"/></svg>
<svg style="left:8.5px;top:321.2px" width="7" height="9"><path d="M1 0.8 L5.2 4.5 L1 8.2Z" fill="#fff" stroke="#a6a6a6" stroke-width="1"/></svg>
<span class="t" style="left:38.50px;top:320px;font-size:10px;line-height:12px;color:#161616;transform:translateY(0.40px) scaleX(0.9650);will-change:transform;-webkit-text-stroke:0.4px #161616;">Time and Pitch</span>
<div style="left:15px;top:342px;width:4px;height:1px;background:repeating-linear-gradient(90deg,#909090 0,#909090 1px,transparent 1px,transparent 2px);"></div>
<svg style="left:19.0px;top:334.0px" width="15" height="15" viewBox="0 0 16 16"><path d="M4 1 H11 L14.5 4.5 V15 H4Z" fill="#f2f3f6" stroke="#a5a9b2" stroke-width="0.9"/>
<path d="M6 5.6 H14 V12.4 H6Z" fill="#8a5ad0" opacity="0.85"/>
<path d="M14 7.8 H6 V5.2 L0.5 9 L6 12.8 V10.2 H14Z" fill="#ee8a2c" stroke="#d66e14" stroke-width="0.5"/></svg>
<svg style="left:8.5px;top:337.0px" width="7" height="9"><path d="M1 0.8 L5.2 4.5 L1 8.2Z" fill="#fff" stroke="#a6a6a6" stroke-width="1"/></svg>
<span class="t" style="left:38.50px;top:336px;font-size:10px;line-height:12px;color:#161616;transform:translateY(0.22px) scaleX(0.9834);will-change:transform;-webkit-text-stroke:0.4px #161616;">Generate</span>
<div style="left:15px;top:357px;width:4px;height:1px;background:repeating-linear-gradient(90deg,#909090 0,#909090 1px,transparent 1px,transparent 2px);"></div>
<svg style="left:19.0px;top:349.8px" width="15" height="15" viewBox="0 0 16 16"><circle cx="3.5" cy="3.5" r="3" fill="#5cc06a"/><circle cx="12.5" cy="3.5" r="3" fill="#f0a04a"/>
<path d="M3.5 4 L8 9.5 L12.5 4" stroke="#e07a28" stroke-width="2.4" fill="none"/>
<ellipse cx="8" cy="12" rx="6" ry="3.2" fill="#e07a28"/></svg>
<span class="t" style="left:38.50px;top:352px;font-size:10px;line-height:12px;color:#161616;transform:translateY(0.04px) scaleX(1.0038);will-change:transform;-webkit-text-stroke:0.4px #161616;">Apply Invert</span>
</div>
<div style="left:3px;top:519px;width:182px;height:15px;background:#f0f0f0;"></div>
<svg style="left:7.5px;top:522px" width="6" height="9"><path d="M4.6 1.4 V7.6 L1.2 4.5Z" fill="#555"/></svg>
<svg style="left:158px;top:522px" width="6" height="9"><path d="M1.4 1.4 V7.6 L4.8 4.5Z" fill="#555"/></svg>
<div style="left:19px;top:520px;width:133px;height:13px;background:linear-gradient(#f2f2f2,#dedede 50%,#bebebe);border:1px solid #a8a8a8;border-radius:2px;"></div>
<div style="left:82px;top:523px;width:1px;height:7px;background:#7a7a7a;"></div>
<div style="left:84px;top:523px;width:1px;height:7px;background:#7a7a7a;"></div>
<div style="left:86px;top:523px;width:1px;height:7px;background:#7a7a7a;"></div>
<div style="left:190.5px;top:137.5px;width:630.5px;height:357.3px;background:#000;"></div>
<div style="left:821px;top:137px;width:32.3px;height:358px;background:#fff;"></div>
<div style="left:853.3px;top:137.5px;width:15px;height:376.3px;background:#000;"></div>
<div style="left:868px;top:137px;width:2px;height:400px;background:#f4f4f4;"></div>
<div style="left:424px;top:149.5px;width:153px;height:162.5px;background:#0660aa;"></div>
<div style="left:424px;top:329px;width:153px;height:162px;background:#0660aa;"></div>
<div style="left:190.5px;top:145px;width:630.5px;height:1px;background:#b4b4b4;"></div>
<div style="left:190.5px;top:157px;width:630.5px;height:1px;background:#949494;"></div>
<div style="left:424px;top:157px;width:153px;height:1px;background:#4c8ed2;"></div>
<div style="left:190.5px;top:312px;width:630.5px;height:1.2px;background:#7e858b;"></div>
<div style="left:190.5px;top:318.7px;width:630.5px;height:2.4px;background:#ededed;"></div>
<div style="left:190.5px;top:329px;width:630.5px;height:1px;background:#80878c;"></div>
<div style="left:190.5px;top:483px;width:630.5px;height:1px;background:#6c6c6c;"></div>
<div style="left:424px;top:483px;width:153px;height:1px;background:#4a8aca;"></div>
<svg style="left:423.8px;top:145.3px" width="6" height="6"><path d="M0.2 0.2 H5.4 L0.2 5Z" fill="#f4f032"/></svg>
<svg style="left:571.6px;top:145.3px" width="6" height="6"><path d="M0.2 0.2 H5.4 L5.4 5Z" fill="#f4f032"/></svg>
<svg style="left:424px;top:490.5px" width="6" height="5"><path d="M0 0 L5 4.6 H0Z" fill="#f4f032"/></svg>
<svg style="left:572px;top:490.5px" width="6" height="5"><path d="M5 0 L0 4.6 H5Z" fill="#f4f032"/></svg>
<div style="left:730.2px;top:138.6px;width:3.8px;height:5.6px;background:#50e85c;"></div>
<svg style="left:0;top:0" width="870" height="566" viewBox="0 0 870 566">
<path d="M190.5 234.2 H821" stroke="#8a8a8a" stroke-width="1" fill="none"/>
<path d="M190.5 406.4 H821" stroke="#8a8a8a" stroke-width="1" fill="none"/>
<path d="M424 234.2 H577" stroke="#4688cc" stroke-width="1" fill="none"/>
<path d="M190.5 213.8 C191.4 215.0 193.6 255.6 195.5 255.7 C197.4 255.9 199.4 220.4 201.1 220.1 C202.7 219.8 202.9 244.2 204.8 243.9 C206.7 243.7 209.4 210.6 211.6 211.3 C213.8 212.0 215.0 270.2 217.1 270.3 C219.2 270.3 221.2 213.9 223.1 213.8 C225.1 213.7 225.9 266.5 227.9 266.5 C229.9 266.5 232.1 214.1 234.2 213.8 C236.2 213.5 237.2 255.5 239.2 255.7 C241.2 256.0 243.7 223.1 245.5 222.6 C247.2 222.2 246.8 239.0 248.7 238.9 C250.7 238.8 253.8 218.3 256.2 218.9 C258.7 219.4 260.5 260.2 262.5 260.2 C264.5 260.3 265.7 221.4 267.5 221.4 C269.3 221.3 270.5 258.3 272.6 258.2 C274.6 258.2 276.8 219.0 278.8 218.9 C280.9 218.7 281.9 251.4 283.8 251.5 C285.7 251.5 287.6 220.4 289.4 220.1 C291.2 219.8 291.5 239.1 293.9 238.9 C296.3 238.8 300.1 214.5 302.7 215.1 C305.2 215.7 306.1 261.5 308.2 261.5 C310.2 261.5 312.1 215.3 313.9 215.1 C315.8 214.9 316.3 255.2 318.2 255.2 C320.1 255.3 322.5 216.7 324.5 216.3 C326.5 216.0 327.6 243.0 329.5 243.2 C331.4 243.4 333.6 224.1 335.3 223.9 C337.0 223.7 336.6 236.5 339.0 236.4 C341.5 236.3 346.6 219.6 349.1 220.1 C351.6 220.6 350.9 253.8 352.8 254.0 C354.7 254.1 357.6 225.5 359.6 225.1 C361.6 224.8 362.0 240.0 364.1 240.2 C366.3 240.4 368.9 232.8 371.6 232.6 C374.4 232.5 376.7 234.7 379.2 234.7 C381.7 234.6 383.2 230.1 385.4 230.1 C387.7 230.2 389.0 237.8 391.7 237.7 C394.4 237.6 398.3 226.5 400.5 226.4 C402.7 226.2 402.9 231.1 404.0 231.4 C405.1 231.7 405.4 236.2 406.5 236.4 C407.6 236.6 409.1 237.8 410.3 237.7 C411.4 237.5 411.9 230.2 412.8 230.1 C413.7 230.1 414.2 235.5 415.3 235.7 C416.4 235.8 417.4 234.7 419.1 234.7 C420.7 234.6 423.6 233.2 424.6 233.2" stroke="#63bf68" stroke-width="1.0" fill="none"/>
<path d="M424.6 233.2 C425.4 233.1 427.1 230.0 429.1 230.1 C431.0 230.3 433.6 239.6 435.4 239.7 C437.2 239.8 437.5 234.0 439.1 233.9 C440.7 233.8 441.9 235.8 444.1 235.7 C446.4 235.5 449.5 228.1 451.7 227.6 C453.8 227.2 454.8 217.7 455.9 218.1 C457.1 218.5 456.7 240.7 457.9 241.4 C459.2 242.2 461.7 247.0 463.0 246.4 C464.2 245.9 464.1 221.9 465.0 221.4 C465.9 220.9 466.8 227.0 468.0 227.6 C469.2 228.2 469.9 243.3 471.7 243.2 C473.5 243.1 476.2 225.5 478.0 225.1 C479.8 224.8 480.6 229.6 481.8 230.1 C483.0 230.7 483.2 245.2 484.8 245.2 C486.4 245.2 489.1 231.6 490.6 231.4 C492.0 231.2 490.8 236.9 493.1 236.4 C495.3 236.0 500.8 213.8 503.1 214.3 C505.4 214.9 504.7 256.8 505.6 257.7 C506.5 258.6 507.0 248.8 508.1 247.7 C509.2 246.6 510.7 217.7 511.9 217.1 C513.0 216.5 513.4 224.2 514.4 225.1 C515.4 226.1 515.6 251.6 517.4 251.5 C519.2 251.3 522.7 220.8 524.4 220.1 C526.1 219.4 525.6 225.5 526.9 226.4 C528.3 227.2 530.1 251.5 531.9 251.5 C533.8 251.4 535.4 224.4 537.0 223.9 C538.5 223.4 539.6 232.2 540.7 232.6 C541.9 233.1 541.4 239.4 543.2 238.9 C545.0 238.4 548.4 213.9 550.8 214.3 C553.1 214.7 554.2 253.7 556.3 254.0 C558.4 254.3 560.4 225.5 562.6 225.1 C564.7 224.7 566.6 238.6 568.3 238.9 C570.0 239.2 570.5 236.7 572.1 236.4 C573.7 236.1 576.2 227.9 577.1 227.6" stroke="#dcecfc" stroke-width="1.1" fill="none"/>
<path d="M577.1 227.6 C578.2 228.0 581.1 240.1 583.4 240.2 C585.6 240.3 587.6 231.6 589.6 231.4 C591.7 231.2 592.4 232.8 594.7 232.6 C596.9 232.5 599.5 225.0 602.2 225.1 C604.9 225.3 607.4 238.7 609.7 238.9 C612.0 239.2 613.1 235.4 615.0 235.2 C617.0 234.9 618.5 230.1 620.5 230.1 C622.6 230.2 624.2 236.4 626.3 236.4 C628.4 236.4 629.8 229.5 632.1 229.6 C634.3 229.8 636.1 241.4 638.9 241.4 C641.6 241.4 644.9 229.9 647.1 229.6 C649.4 229.4 649.8 232.7 651.4 232.6 C653.0 232.6 653.2 228.0 655.9 228.1 C658.6 228.3 662.9 238.9 666.4 238.9 C670.0 238.9 672.8 228.4 675.7 228.4 C678.7 228.4 680.7 238.1 682.8 238.2 C684.8 238.3 685.2 232.0 687.3 232.1 C689.3 232.3 691.6 242.3 694.0 242.2 C696.5 242.1 698.8 228.4 700.8 228.1 C702.8 227.9 703.3 233.3 705.3 233.2 C707.4 233.0 709.4 224.2 712.1 224.4 C714.8 224.5 717.8 238.6 720.4 238.9 C723.0 239.2 724.7 236.6 726.7 236.4 C728.6 236.2 729.1 231.4 731.2 231.4 C733.2 231.4 735.8 237.7 737.9 237.7 C740.1 237.6 740.9 230.0 743.0 230.1 C745.0 230.2 747.0 241.5 749.2 241.4 C751.5 241.4 753.3 229.6 755.5 229.4 C757.8 229.2 759.2 234.9 761.8 234.7 C764.4 234.4 766.9 221.3 769.8 221.4 C772.7 221.4 775.2 237.4 778.1 237.7 C780.9 237.9 782.2 231.5 785.6 231.4 C789.0 231.3 793.4 234.2 796.9 234.7 C800.4 235.1 802.2 247.1 805.2 247.2 C808.1 247.3 810.4 239.3 813.2 238.9 C816.0 238.6 819.4 234.8 820.7 234.7" stroke="#63bf68" stroke-width="1.0" fill="none"/>
<path d="M190.5 385.5 C191.2 386.6 192.8 427.3 194.6 427.5 C196.4 427.6 198.5 391.5 200.3 391.2 C202.1 390.9 202.5 416.9 204.5 416.7 C206.5 416.4 209.2 381.6 211.5 382.3 C213.7 383.0 214.8 442.0 216.9 442.1 C219.0 442.2 221.2 386.2 223.2 386.1 C225.2 386.0 226.1 437.0 228.0 437.0 C229.9 437.1 231.7 388.0 233.7 387.7 C235.7 387.4 237.1 426.7 239.2 426.8 C241.2 427.0 243.5 394.7 245.2 394.4 C246.9 394.0 246.8 413.6 248.7 413.5 C250.6 413.3 253.7 388.1 256.0 388.7 C258.4 389.2 259.6 435.4 261.7 435.4 C263.9 435.5 266.2 390.4 268.1 390.2 C270.1 390.1 270.7 430.6 272.6 430.7 C274.4 430.7 276.2 391.4 278.3 391.2 C280.4 391.0 282.0 422.0 284.0 422.1 C286.0 422.1 287.8 393.7 289.4 393.4 C291.1 393.1 290.8 411.7 293.3 411.6 C295.7 411.5 300.5 388.7 303.1 389.3 C305.7 389.9 305.7 433.9 307.6 433.8 C309.4 433.8 311.5 387.2 313.3 387.1 C315.1 386.9 315.4 429.4 317.4 429.4 C319.5 429.4 322.5 386.5 324.4 386.1 C326.4 385.7 326.3 415.6 328.3 415.7 C330.3 415.8 333.1 388.3 335.6 388.7 C338.0 389.0 340.8 428.9 342.0 430.0" stroke="#63bf68" stroke-width="1.0" fill="none"/>
<path d="M669.5 404.6 C670.7 404.5 673.7 402.9 675.9 403.0 C678.1 403.0 679.6 407.0 681.6 407.1 C683.6 407.2 684.9 406.0 687.1 406.2 C689.2 406.3 691.1 411.6 693.4 411.6 C695.7 411.5 697.5 404.1 699.8 403.9 C702.1 403.8 704.0 405.4 706.1 405.2 C708.3 405.0 709.7 395.6 711.6 395.7 C713.5 395.7 714.5 408.1 716.7 408.4 C718.8 408.7 721.5 407.1 723.7 407.1 C725.8 407.1 726.7 409.4 728.4 409.3 C730.1 409.3 731.3 404.6 733.2 404.6 C735.1 404.5 737.1 408.4 738.9 408.4 C740.8 408.4 741.4 403.9 743.4 403.9 C745.3 404.0 747.7 410.9 749.8 410.9 C751.8 410.9 752.7 403.8 754.8 403.6 C757.0 403.5 759.2 405.4 761.8 405.2 C764.5 405.0 767.2 394.9 769.8 395.0 C772.4 395.1 773.9 408.1 776.2 408.4 C778.5 408.6 780.2 404.7 782.5 404.6 C784.8 404.4 786.6 402.9 788.9 403.0 C791.2 403.0 792.2 406.7 795.3 407.1 C798.3 407.5 802.6 418.8 805.8 418.9 C808.9 419.0 810.6 411.3 812.8 410.9 C814.9 410.6 816.1 406.2 817.5 406.2 C819.0 406.1 820.2 408.3 820.7 408.4" stroke="#63bf68" stroke-width="1.0" fill="none"/>
</svg>
<div style="left:821px;top:137.5px;width:2.3px;height:357.5px;background:#cdcdcd;"></div>
<div style="left:823.3px;top:318.7px;width:30px;height:2.4px;background:#dedede;"></div>
<span class="t" style="left:831.00px;top:136px;font-size:9.5px;line-height:11.5px;color:#333;transform:translateY(0.45px) scaleX(0.9123);will-change:transform;">dB</span>
<div style="left:823.3px;top:150.725px;width:5.5px;height:1.2px;background:#2c2c2c;"></div>
<div style="left:823.3px;top:156.6625px;width:2.8px;height:1.2px;background:#333;"></div>
<div style="left:823.3px;top:162.6px;width:5.5px;height:1.2px;background:#2c2c2c;"></div>
<div style="left:823.3px;top:168.5375px;width:2.8px;height:1.2px;background:#333;"></div>
<div style="left:823.3px;top:174.475px;width:5.5px;height:1.2px;background:#2c2c2c;"></div>
<div style="left:823.3px;top:180.4125px;width:2.8px;height:1.2px;background:#333;"></div>
<div style="left:823.3px;top:186.35px;width:5.5px;height:1.2px;background:#2c2c2c;"></div>
<div style="left:823.3px;top:192.2875px;width:2.8px;height:1.2px;background:#333;"></div>
<div style="left:823.3px;top:198.225px;width:5.5px;height:1.2px;background:#2c2c2c;"></div>
<div style="left:823.3px;top:204.1625px;width:2.8px;height:1.2px;background:#333;"></div>
<div style="left:823.3px;top:210.1px;width:5.5px;height:1.2px;background:#2c2c2c;"></div>
<div style="left:823.3px;top:216.0375px;width:2.8px;height:1.2px;background:#333;"></div>
<div style="left:823.3px;top:221.975px;width:5.5px;height:1.2px;background:#2c2c2c;"></div>
<div style="left:823.3px;top:227.9125px;width:2.8px;height:1.2px;background:#333;"></div>
<div style="left:823.3px;top:233.85px;width:5.5px;height:1.2px;background:#2c2c2c;"></div>
<div style="left:823.3px;top:239.7875px;width:2.8px;height:1.2px;background:#333;"></div>
<div style="left:823.3px;top:245.725px;width:5.5px;height:1.2px;background:#2c2c2c;"></div>
<div style="left:823.3px;top:251.6625px;width:2.8px;height:1.2px;background:#333;"></div>
<div style="left:823.3px;top:257.59999999999997px;width:5.5px;height:1.2px;background:#2c2c2c;"></div>
<div style="left:823.3px;top:263.53749999999997px;width:2.8px;height:1.2px;background:#333;"></div>
<div style="left:823.3px;top:269.47499999999997px;width:5.5px;height:1.2px;background:#2c2c2c;"></div>
<div style="left:823.3px;top:275.41249999999997px;width:2.8px;height:1.2px;background:#333;"></div>
<div style="left:823.3px;top:281.34999999999997px;width:5.5px;height:1.2px;background:#2c2c2c;"></div>
<div style="left:823.3px;top:287.28749999999997px;width:2.8px;height:1.2px;background:#333;"></div>
<div style="left:823.3px;top:293.22499999999997px;width:5.5px;height:1.2px;background:#2c2c2c;"></div>
<div style="left:823.3px;top:299.16249999999997px;width:2.8px;height:1.2px;background:#333;"></div>
<div style="left:823.3px;top:305.09999999999997px;width:5.5px;height:1.2px;background:#2c2c2c;"></div>
<div style="left:823.3px;top:311.03749999999997px;width:2.8px;height:1.2px;background:#333;"></div>
<div style="left:823.3px;top:316.97499999999997px;width:5.5px;height:1.2px;background:#2c2c2c;"></div>
<span class="t" style="left:834.30px;top:157px;font-size:9.5px;line-height:11.5px;color:#1e1e1e;transform:translateY(0.55px) scaleX(0.7695);will-change:transform;-webkit-text-stroke:0.15px #1e1e1e;">-1</span>
<span class="t" style="left:834.30px;top:169px;font-size:9.5px;line-height:11.5px;color:#1e1e1e;transform:translateY(0.42px) scaleX(0.7695);will-change:transform;-webkit-text-stroke:0.15px #1e1e1e;">-2</span>
<span class="t" style="left:834.30px;top:181px;font-size:9.5px;line-height:11.5px;color:#1e1e1e;transform:translateY(0.30px) scaleX(0.7695);will-change:transform;-webkit-text-stroke:0.15px #1e1e1e;">-4</span>
<span class="t" style="left:834.30px;top:193px;font-size:9.5px;line-height:11.5px;color:#1e1e1e;transform:translateY(0.17px) scaleX(0.7695);will-change:transform;-webkit-text-stroke:0.15px #1e1e1e;">-7</span>
<span class="t" style="left:834.30px;top:205px;font-size:9.5px;line-height:11.5px;color:#1e1e1e;transform:translateY(0.05px) scaleX(0.8230);will-change:transform;-webkit-text-stroke:0.15px #1e1e1e;">-10</span>
<span class="t" style="left:834.30px;top:216px;font-size:9.5px;line-height:11.5px;color:#1e1e1e;transform:translateY(0.92px) scaleX(0.8230);will-change:transform;-webkit-text-stroke:0.15px #1e1e1e;">-16</span>
<span class="t" style="left:834.30px;top:228px;font-size:9.5px;line-height:11.5px;color:#1e1e1e;transform:translateY(0.80px) scaleX(0.8230);will-change:transform;font-weight:bold;-webkit-text-stroke:0.15px #1e1e1e;">-90</span>
<span class="t" style="left:834.30px;top:240px;font-size:9.5px;line-height:11.5px;color:#1e1e1e;transform:translateY(0.67px) scaleX(0.8230);will-change:transform;-webkit-text-stroke:0.15px #1e1e1e;">-16</span>
<span class="t" style="left:834.30px;top:252px;font-size:9.5px;line-height:11.5px;color:#1e1e1e;transform:translateY(0.55px) scaleX(0.8230);will-change:transform;-webkit-text-stroke:0.15px #1e1e1e;">-10</span>
<span class="t" style="left:834.30px;top:264px;font-size:9.5px;line-height:11.5px;color:#1e1e1e;transform:translateY(0.43px) scaleX(0.7695);will-change:transform;-webkit-text-stroke:0.15px #1e1e1e;">-7</span>
<span class="t" style="left:834.30px;top:276px;font-size:9.5px;line-height:11.5px;color:#1e1e1e;transform:translateY(0.30px) scaleX(0.7695);will-change:transform;-webkit-text-stroke:0.15px #1e1e1e;">-4</span>
<span class="t" style="left:834.30px;top:288px;font-size:9.5px;line-height:11.5px;color:#1e1e1e;transform:translateY(0.18px) scaleX(0.7695);will-change:transform;-webkit-text-stroke:0.15px #1e1e1e;">-2</span>
<span class="t" style="left:834.30px;top:300px;font-size:9.5px;line-height:11.5px;color:#1e1e1e;transform:translateY(0.05px) scaleX(0.7695);will-change:transform;-webkit-text-stroke:0.15px #1e1e1e;">-1</span>
<div style="left:823.3px;top:321.9px;width:5.5px;height:1.2px;background:#2c2c2c;"></div>
<div style="left:823.3px;top:327.84999999999997px;width:2.8px;height:1.2px;background:#333;"></div>
<div style="left:823.3px;top:333.79999999999995px;width:5.5px;height:1.2px;background:#2c2c2c;"></div>
<div style="left:823.3px;top:339.74999999999994px;width:2.8px;height:1.2px;background:#333;"></div>
<div style="left:823.3px;top:345.69999999999993px;width:5.5px;height:1.2px;background:#2c2c2c;"></div>
<div style="left:823.3px;top:351.6499999999999px;width:2.8px;height:1.2px;background:#333;"></div>
<div style="left:823.3px;top:357.59999999999997px;width:5.5px;height:1.2px;background:#2c2c2c;"></div>
<div style="left:823.3px;top:363.54999999999995px;width:2.8px;height:1.2px;background:#333;"></div>
<div style="left:823.3px;top:369.49999999999994px;width:5.5px;height:1.2px;background:#2c2c2c;"></div>
<div style="left:823.3px;top:375.44999999999993px;width:2.8px;height:1.2px;background:#333;"></div>
<div style="left:823.3px;top:381.4px;width:5.5px;height:1.2px;background:#2c2c2c;"></div>
<div style="left:823.3px;top:387.34999999999997px;width:2.8px;height:1.2px;background:#333;"></div>
<div style="left:823.3px;top:393.29999999999995px;width:5.5px;height:1.2px;background:#2c2c2c;"></div>
<div style="left:823.3px;top:399.24999999999994px;width:2.8px;height:1.2px;background:#333;"></div>
<div style="left:823.3px;top:405.19999999999993px;width:5.5px;height:1.2px;background:#2c2c2c;"></div>
<div style="left:823.3px;top:411.1499999999999px;width:2.8px;height:1.2px;background:#333;"></div>
<div style="left:823.3px;top:417.09999999999997px;width:5.5px;height:1.2px;background:#2c2c2c;"></div>
<div style="left:823.3px;top:423.04999999999995px;width:2.8px;height:1.2px;background:#333;"></div>
<div style="left:823.3px;top:428.99999999999994px;width:5.5px;height:1.2px;background:#2c2c2c;"></div>
<div style="left:823.3px;top:434.94999999999993px;width:2.8px;height:1.2px;background:#333;"></div>
<div style="left:823.3px;top:440.9px;width:5.5px;height:1.2px;background:#2c2c2c;"></div>
<div style="left:823.3px;top:446.84999999999997px;width:2.8px;height:1.2px;background:#333;"></div>
<div style="left:823.3px;top:452.79999999999995px;width:5.5px;height:1.2px;background:#2c2c2c;"></div>
<div style="left:823.3px;top:458.74999999999994px;width:2.8px;height:1.2px;background:#333;"></div>
<div style="left:823.3px;top:464.69999999999993px;width:5.5px;height:1.2px;background:#2c2c2c;"></div>
<div style="left:823.3px;top:470.6499999999999px;width:2.8px;height:1.2px;background:#333;"></div>
<div style="left:823.3px;top:476.59999999999997px;width:5.5px;height:1.2px;background:#2c2c2c;"></div>
<div style="left:823.3px;top:482.54999999999995px;width:2.8px;height:1.2px;background:#333;"></div>
<div style="left:823.3px;top:488.5px;width:5.5px;height:1.2px;background:#2c2c2c;"></div>
<span class="t" style="left:834.30px;top:328px;font-size:9.5px;line-height:11.5px;color:#1e1e1e;transform:translateY(0.75px) scaleX(0.7695);will-change:transform;-webkit-text-stroke:0.15px #1e1e1e;">-1</span>
<span class="t" style="left:834.30px;top:340px;font-size:9.5px;line-height:11.5px;color:#1e1e1e;transform:translateY(0.65px) scaleX(0.7695);will-change:transform;-webkit-text-stroke:0.15px #1e1e1e;">-2</span>
<span class="t" style="left:834.30px;top:352px;font-size:9.5px;line-height:11.5px;color:#1e1e1e;transform:translateY(0.55px) scaleX(0.7695);will-change:transform;-webkit-text-stroke:0.15px #1e1e1e;">-4</span>
<span class="t" style="left:834.30px;top:364px;font-size:9.5px;line-height:11.5px;color:#1e1e1e;transform:translateY(0.45px) scaleX(0.7695);will-change:transform;-webkit-text-stroke:0.15px #1e1e1e;">-7</span>
<span class="t" style="left:834.30px;top:376px;font-size:9.5px;line-height:11.5px;color:#1e1e1e;transform:translateY(0.35px) scaleX(0.8230);will-change:transform;-webkit-text-stroke:0.15px #1e1e1e;">-10</span>
<span class="t" style="left:834.30px;top:388px;font-size:9.5px;line-height:11.5px;color:#1e1e1e;transform:translateY(0.25px) scaleX(0.8230);will-change:transform;-webkit-text-stroke:0.15px #1e1e1e;">-16</span>
<span class="t" style="left:834.30px;top:400px;font-size:9.5px;line-height:11.5px;color:#1e1e1e;transform:translateY(0.15px) scaleX(0.8230);will-change:transform;font-weight:bold;-webkit-text-stroke:0.15px #1e1e1e;">-90</span>
<span class="t" style="left:834.30px;top:412px;font-size:9.5px;line-height:11.5px;color:#1e1e1e;transform:translateY(0.05px) scaleX(0.8230);will-change:transform;-webkit-text-stroke:0.15px #1e1e1e;">-16</span>
<span class="t" style="left:834.30px;top:423px;font-size:9.5px;line-height:11.5px;color:#1e1e1e;transform:translateY(0.95px) scaleX(0.8230);will-change:transform;-webkit-text-stroke:0.15px #1e1e1e;">-10</span>
<span class="t" style="left:834.30px;top:435px;font-size:9.5px;line-height:11.5px;color:#1e1e1e;transform:translateY(0.85px) scaleX(0.7695);will-change:transform;-webkit-text-stroke:0.15px #1e1e1e;">-7</span>
<span class="t" style="left:834.30px;top:447px;font-size:9.5px;line-height:11.5px;color:#1e1e1e;transform:translateY(0.75px) scaleX(0.7695);will-change:transform;-webkit-text-stroke:0.15px #1e1e1e;">-4</span>
<span class="t" style="left:834.30px;top:459px;font-size:9.5px;line-height:11.5px;color:#1e1e1e;transform:translateY(0.65px) scaleX(0.7695);will-change:transform;-webkit-text-stroke:0.15px #1e1e1e;">-2</span>
<span class="t" style="left:834.30px;top:471px;font-size:9.5px;line-height:11.5px;color:#1e1e1e;transform:translateY(0.55px) scaleX(0.7695);will-change:transform;-webkit-text-stroke:0.15px #1e1e1e;">-1</span>
<div style="left:190px;top:495px;width:663px;height:21px;background:#fff;"></div>
<svg style="left:0;top:495px" width="870" height="10" viewBox="0 0 870 10">
<path d="M194.7 1.4 V3.8M200.4 1.4 V6.7M206.1 1.4 V3.8M211.8 1.4 V3.8M217.4 1.4 V3.8M223.1 1.4 V3.8M228.8 1.4 V3.8M234.5 1.4 V3.8M240.2 1.4 V3.8M245.8 1.4 V3.8M251.5 1.4 V3.8M257.2 1.4 V6.7M262.9 1.4 V3.8M268.6 1.4 V3.8M274.2 1.4 V3.8M279.9 1.4 V3.8M285.6 1.4 V3.8M291.3 1.4 V3.8M297.0 1.4 V3.8M302.6 1.4 V3.8M308.3 1.4 V3.8M314.0 1.4 V6.7M319.7 1.4 V3.8M325.4 1.4 V3.8M331.0 1.4 V3.8M336.7 1.4 V3.8M342.4 1.4 V3.8M348.1 1.4 V3.8M353.8 1.4 V3.8M359.4 1.4 V3.8M365.1 1.4 V3.8M370.8 1.4 V6.7M376.5 1.4 V3.8M382.2 1.4 V3.8M387.8 1.4 V3.8M393.5 1.4 V3.8M399.2 1.4 V3.8M404.9 1.4 V3.8M410.6 1.4 V3.8M416.2 1.4 V3.8M421.9 1.4 V3.8M427.6 1.4 V6.7M433.3 1.4 V3.8M439.0 1.4 V3.8M444.6 1.4 V3.8M450.3 1.4 V3.8M456.0 1.4 V3.8M461.7 1.4 V3.8M467.4 1.4 V3.8M473.0 1.4 V3.8M478.7 1.4 V3.8M484.4 1.4 V6.7M490.1 1.4 V3.8M495.8 1.4 V3.8M501.4 1.4 V3.8M507.1 1.4 V3.8M512.8 1.4 V3.8M518.5 1.4 V3.8M524.2 1.4 V3.8M529.8 1.4 V3.8M535.5 1.4 V3.8M541.2 1.4 V6.7M546.9 1.4 V3.8M552.6 1.4 V3.8M558.2 1.4 V3.8M563.9 1.4 V3.8M569.6 1.4 V3.8M575.3 1.4 V3.8M581.0 1.4 V3.8M586.6 1.4 V3.8M592.3 1.4 V3.8M598.0 1.4 V6.7M603.7 1.4 V3.8M609.4 1.4 V3.8M615.0 1.4 V3.8M620.7 1.4 V3.8M626.4 1.4 V3.8M632.1 1.4 V3.8M637.8 1.4 V3.8M643.4 1.4 V3.8M649.1 1.4 V3.8M654.8 1.4 V6.7M660.5 1.4 V3.8M666.2 1.4 V3.8M671.8 1.4 V3.8M677.5 1.4 V3.8M683.2 1.4 V3.8M688.9 1.4 V3.8M694.6 1.4 V3.8M700.2 1.4 V3.8M705.9 1.4 V3.8M711.6 1.4 V6.7M717.3 1.4 V3.8M723.0 1.4 V3.8M728.6 1.4 V3.8M734.3 1.4 V3.8M740.0 1.4 V3.8M745.7 1.4 V3.8M751.4 1.4 V3.8M757.0 1.4 V3.8M762.7 1.4 V3.8M768.4 1.4 V6.7M774.1 1.4 V3.8M779.8 1.4 V3.8M785.4 1.4 V3.8M791.1 1.4 V3.8M796.8 1.4 V3.8M802.5 1.4 V3.8M808.2 1.4 V3.8M813.8 1.4 V3.8M819.5 1.4 V3.8" stroke="#222" stroke-width="1.1" fill="none"/>
</svg>
<span class="t" style="left:192.00px;top:501px;font-size:9.5px;line-height:11.5px;color:#222;transform:translateY(0.45px) scaleX(0.8358);will-change:transform;">hms</span>
<span class="t" style="left:243.45px;top:501px;font-size:9.5px;line-height:11.5px;color:#222;transform:translateY(0.45px) scaleX(0.8677);will-change:transform;-webkit-text-stroke:0.15px #222;">6:30.14</span>
<span class="t" style="left:300.25px;top:501px;font-size:9.5px;line-height:11.5px;color:#222;transform:translateY(0.45px) scaleX(0.8677);will-change:transform;-webkit-text-stroke:0.15px #222;">6:30.15</span>
<span class="t" style="left:357.05px;top:501px;font-size:9.5px;line-height:11.5px;color:#222;transform:translateY(0.45px) scaleX(0.8677);will-change:transform;-webkit-text-stroke:0.15px #222;">6:30.16</span>
<span class="t" style="left:413.85px;top:501px;font-size:9.5px;line-height:11.5px;color:#222;transform:translateY(0.45px) scaleX(0.8677);will-change:transform;-webkit-text-stroke:0.15px #222;">6:30.17</span>
<span class="t" style="left:470.65px;top:501px;font-size:9.5px;line-height:11.5px;color:#222;transform:translateY(0.45px) scaleX(0.8677);will-change:transform;-webkit-text-stroke:0.15px #222;">6:30.18</span>
<span class="t" style="left:527.45px;top:501px;font-size:9.5px;line-height:11.5px;color:#222;transform:translateY(0.45px) scaleX(0.8677);will-change:transform;-webkit-text-stroke:0.15px #222;">6:30.19</span>
<span class="t" style="left:584.25px;top:501px;font-size:9.5px;line-height:11.5px;color:#222;transform:translateY(0.45px) scaleX(0.8677);will-change:transform;-webkit-text-stroke:0.15px #222;">6:30.20</span>
<span class="t" style="left:641.05px;top:501px;font-size:9.5px;line-height:11.5px;color:#222;transform:translateY(0.45px) scaleX(0.8677);will-change:transform;-webkit-text-stroke:0.15px #222;">6:30.21</span>
<span class="t" style="left:697.85px;top:501px;font-size:9.5px;line-height:11.5px;color:#222;transform:translateY(0.45px) scaleX(0.8677);will-change:transform;-webkit-text-stroke:0.15px #222;">6:30.22</span>
<span class="t" style="left:754.65px;top:501px;font-size:9.5px;line-height:11.5px;color:#222;transform:translateY(0.45px) scaleX(0.8677);will-change:transform;-webkit-text-stroke:0.15px #222;">6:30.23</span>
<div style="left:190px;top:515.3px;width:678px;height:9.7px;background:linear-gradient(#f4f4f4,#ececec);border-top:1px solid #dcdcdc;"></div>
<div style="left:190px;top:525px;width:678px;height:10.5px;background:linear-gradient(#f4f4f4,#eaeaea);border-top:1px solid #d4d4d4;"></div>
<svg style="left:193px;top:516.0px" width="5" height="8"><path d="M4.2 1 V6.6 L1 3.8Z" fill="#444"/></svg>
<svg style="left:858px;top:516.0px" width="5" height="8"><path d="M0.8 1 V6.6 L4 3.8Z" fill="#444"/></svg>
<svg style="left:193px;top:526.2px" width="5" height="8"><path d="M4.2 1 V6.6 L1 3.8Z" fill="#444"/></svg>
<svg style="left:858px;top:526.2px" width="5" height="8"><path d="M0.8 1 V6.6 L4 3.8Z" fill="#444"/></svg>
<div style="left:749px;top:515.8px;width:13px;height:8.2px;background:linear-gradient(#ececec,#c4c4c4);border:1px solid #a2a2a2;border-radius:1px;"></div>
<div style="left:749px;top:526px;width:13px;height:8.8px;background:linear-gradient(#ececec,#c4c4c4);border:1px solid #a2a2a2;border-radius:1px;"></div>
<div style="left:1px;top:535.2px;width:867px;height:28.8px;background:linear-gradient(#ebebeb,#e4e4e4 40%,#d8d8d8 80%,#cecece);border-top:1px solid #f8f8f8;"></div>
<div style="left:0px;top:565px;width:870px;height:1px;background:#f6f6f6;"></div>
<div style="left:1px;top:564px;width:868px;height:1px;background:#8e8e8e;"></div>
<div style="left:1px;top:137px;width:1px;height:428px;background:#8a8a8a;z-index:52;"></div>
<div style="left:9.0px;top:539.0px;width:17.6px;height:17.6px;border-radius:50%;background:linear-gradient(#f8f8f8,#ececec);border:1.7px solid #a2a2a2;box-shadow:0 0 0 1px rgba(255,255,255,0.75);"></div>
<svg style="left:11.8px;top:541.8px" width="12" height="12" viewBox="-6 -6 12 12"><path d="M-2.2 -3.4 V3.4" stroke="#767676" stroke-width="1.7"/><path d="M3.2 -3.4 V3.4 L-0.8 0Z" fill="#767676"/></svg>
<div style="left:29.999999999999996px;top:539.0px;width:17.6px;height:17.6px;border-radius:50%;background:linear-gradient(#f8f8f8,#ececec);border:1.7px solid #a2a2a2;box-shadow:0 0 0 1px rgba(255,255,255,0.75);"></div>
<svg style="left:32.8px;top:541.8px" width="12" height="12" viewBox="-6 -6 12 12"><path d="M0 -3.4 V3.4 L-4.4 0Z M4.4 -3.4 V3.4 L0 0Z" fill="#767676"/></svg>
<div style="left:58.2px;top:539.0px;width:17.6px;height:17.6px;border-radius:50%;background:linear-gradient(#f8f8f8,#ececec);border:1.7px solid #a2a2a2;box-shadow:0 0 0 1px rgba(255,255,255,0.75);"></div>
<svg style="left:61.0px;top:541.8px" width="12" height="12" viewBox="-6 -6 12 12"><rect x="-3" y="-3" width="6" height="6" fill="#767676"/></svg>
<div style="left:79.4px;top:539.0px;width:17.6px;height:17.6px;border-radius:50%;background:linear-gradient(#f8f8f8,#ececec);border:1.7px solid #a2a2a2;box-shadow:0 0 0 1px rgba(255,255,255,0.75);"></div>
<svg style="left:82.2px;top:541.8px" width="12" height="12" viewBox="-6 -6 12 12"><path d="M-1.8 -3.8 V3.8 L3 0Z" fill="#767676"/></svg>
<div style="left:100.0px;top:539.0px;width:17.6px;height:17.6px;border-radius:50%;background:linear-gradient(#f8f8f8,#ececec);border:1.7px solid #a2a2a2;box-shadow:0 0 0 1px rgba(255,255,255,0.75);"></div>
<svg style="left:102.8px;top:541.8px" width="12" height="12" viewBox="-6 -6 12 12"><path d="M-3.4 -1.4 H2 M0.6 -3.2 L2.8 -1.4 L0.6 0.2 M3.4 1.6 H-2 M-0.6 -0.2 L-2.8 1.6 L-0.6 3.4" stroke="#767676" stroke-width="1.3" fill="none"/></svg>
<div style="left:121.10000000000001px;top:539.0px;width:17.6px;height:17.6px;border-radius:50%;background:linear-gradient(#f8f8f8,#ececec);border:1.7px solid #a2a2a2;box-shadow:0 0 0 1px rgba(255,255,255,0.75);"></div>
<svg style="left:123.9px;top:541.8px" width="12" height="12" viewBox="-6 -6 12 12"><path d="M-4 -1.6 H0 V-4 L4.2 0 L0 4 V1.6 H-4Z" fill="#767676"/></svg>
<div style="left:142.1px;top:539.0px;width:17.6px;height:17.6px;border-radius:50%;background:linear-gradient(#f8f8f8,#ececec);border:1.7px solid #a2a2a2;box-shadow:0 0 0 1px rgba(255,255,255,0.75);"></div>
<svg style="left:144.9px;top:541.8px" width="12" height="12" viewBox="-6 -6 12 12"><path d="M-1.8 -3.4 V3.4 M1.8 -3.4 V3.4" stroke="#767676" stroke-width="1.8"/></svg>
<div style="left:170.2px;top:539.0px;width:17.6px;height:17.6px;border-radius:50%;background:linear-gradient(#f8f8f8,#ececec);border:1.7px solid #a2a2a2;box-shadow:0 0 0 1px rgba(255,255,255,0.75);"></div>
<svg style="left:173.0px;top:541.8px" width="12" height="12" viewBox="-6 -6 12 12"><path d="M-4.2 -3.4 V3.4 L0 0Z M0.2 -3.4 V3.4 L4.4 0Z" fill="#767676"/></svg>
<div style="left:191.5px;top:539.0px;width:17.6px;height:17.6px;border-radius:50%;background:linear-gradient(#f8f8f8,#ececec);border:1.7px solid #a2a2a2;box-shadow:0 0 0 1px rgba(255,255,255,0.75);"></div>
<svg style="left:194.3px;top:541.8px" width="12" height="12" viewBox="-6 -6 12 12"><path d="M-3.4 -3.6 V3.6 L1.8 0Z" fill="#767676"/><path d="M3.4 -3.4 V3.4" stroke="#767676" stroke-width="1.8"/></svg>
<div style="left:219.6px;top:539.0px;width:17.6px;height:17.6px;border-radius:50%;background:linear-gradient(#f8f8f8,#ececec);border:1.7px solid #a2a2a2;box-shadow:0 0 0 1px rgba(255,255,255,0.75);"></div>
<svg style="left:222.4px;top:541.8px" width="12" height="12" viewBox="-6 -6 12 12"></svg>
<span class="t" style="left:225.17px;top:542px;font-size:9.5px;line-height:11.5px;color:#747474;transform:translateY(0.45px) scaleX(1.0000);will-change:transform;font-weight:bold;">R</span>
<span class="t" style="left:247.90px;top:544px;font-size:9px;line-height:11px;color:#7e7e7e;transform:translateY(0.40px) scaleX(0.9948);will-change:transform;font-weight:bold;text-shadow:0 1px 1px #fff,0 0 2px rgba(255,255,255,0.8);-webkit-text-stroke:0.2px #7e7e7e;">Selection</span>
<span class="t" style="left:455.00px;top:544px;font-size:9px;line-height:11px;color:#7e7e7e;transform:translateY(0.40px) scaleX(0.9337);will-change:transform;font-weight:bold;text-shadow:0 1px 1px #fff,0 0 2px rgba(255,255,255,0.8);-webkit-text-stroke:0.2px #7e7e7e;">Length</span>
<div style="left:299.8px;top:541.7px;width:143.2px;height:17px;background:linear-gradient(#3b3e43,#44474c);border-radius:2.5px;box-shadow:0 0 0 1px rgba(235,235,235,0.9);"></div>
<div style="left:496.9px;top:541.7px;width:143.4px;height:17px;background:linear-gradient(#3b3e43,#44474c);border-radius:2.5px;box-shadow:0 0 0 1px rgba(235,235,235,0.9);"></div>
<span class="t" style="left:302.40px;top:543px;font-size:11.5px;line-height:13.5px;color:#ececec;transform:translateY(0.25px) scaleX(0.9401);will-change:transform;font-weight:bold;font-style:italic;">0:06:30.169</span>
<span class="t" style="left:379.40px;top:543px;font-size:11.5px;line-height:13.5px;color:#ececec;transform:translateY(0.25px) scaleX(0.9417);will-change:transform;font-weight:bold;font-style:italic;">0:06:30.196</span>
<span class="t" style="left:499.50px;top:543px;font-size:11.5px;line-height:13.5px;color:#ececec;transform:translateY(0.25px) scaleX(0.9401);will-change:transform;font-weight:bold;font-style:italic;">0:00:00.027</span>
<span class="t" style="left:578.80px;top:543px;font-size:11.5px;line-height:13.5px;color:#ececec;transform:translateY(0.25px) scaleX(0.9352);will-change:transform;font-weight:bold;font-style:italic;">0:07:34.687</span>
<svg style="left:753.0px;top:538.5px" width="18" height="18" viewBox="-9 -9 18 18"><path d="M1.5 2.5 L6 7.2" stroke="#3c4046" stroke-width="2.6" stroke-linecap="round"/><circle cx="-1.8" cy="-1.2" r="5" fill="#f4f6f9" stroke="#8c929a" stroke-width="1.2"/><path d="M-1 -2.5 H5 M2 -5.2 V0.2" stroke="#2f7fd6" stroke-width="1.9"/></svg>
<svg style="left:772.3px;top:538.5px" width="18" height="18" viewBox="-9 -9 18 18"><path d="M1.5 2.5 L6 7.2" stroke="#3c4046" stroke-width="2.6" stroke-linecap="round"/><circle cx="-1.8" cy="-1.2" r="5" fill="#f4f6f9" stroke="#8c929a" stroke-width="1.2"/><path d="M-1 -2.5 H5.5" stroke="#2f7fd6" stroke-width="2"/></svg>
<svg style="left:791.8px;top:538.5px" width="18" height="18" viewBox="-9 -9 18 18"><path d="M1.5 2.5 L6 7.2" stroke="#3c4046" stroke-width="2.6" stroke-linecap="round"/><circle cx="-1.8" cy="-1.2" r="5" fill="#f4f6f9" stroke="#8c929a" stroke-width="1.2"/><path d="M5.5 -6 V4.5 M-6 5.8 H1" stroke="#8c929a" stroke-width="1" stroke-dasharray="1.4 1.1"/></svg>
<svg style="left:811.0px;top:538.5px" width="18" height="18" viewBox="-9 -9 18 18"><path d="M1.5 2.5 L6 7.2" stroke="#3c4046" stroke-width="2.6" stroke-linecap="round"/><circle cx="-1.8" cy="-1.2" r="5" fill="#f4f6f9" stroke="#8c929a" stroke-width="1.2"/><path d="M-4.5 -1.8 H1" stroke="#2f7fd6" stroke-width="1.8"/><circle cx="3.6" cy="-2.6" r="2.8" fill="#2f7fd6"/></svg>
<svg style="left:830.3px;top:538.5px" width="18" height="18" viewBox="-9 -9 18 18"><path d="M1.5 2.5 L6 7.2" stroke="#3c4046" stroke-width="2.6" stroke-linecap="round"/><circle cx="-1.8" cy="-1.2" r="5" fill="#f4f6f9" stroke="#8c929a" stroke-width="1.2"/><path d="M-4.3 -1.2 H0.7 M-1.8 -3.7 V1.3" stroke="#2f7fd6" stroke-width="1.7"/><path d="M5.2 -6 V6" stroke="#2f7fd6" stroke-width="1.8"/><path d="M3 -4 L5.2 -6.6 L7.4 -4Z M3 4.4 L5.2 7.2 L7.4 4.4Z" fill="#2f7fd6"/></svg>
<svg style="left:849.6px;top:538.5px" width="18" height="18" viewBox="-9 -9 18 18"><path d="M1.5 2.5 L6 7.2" stroke="#3c4046" stroke-width="2.6" stroke-linecap="round"/><circle cx="-1.8" cy="-1.2" r="5" fill="#f4f6f9" stroke="#8c929a" stroke-width="1.2"/><path d="M-4.3 -1.2 H0.7" stroke="#2f7fd6" stroke-width="1.8"/><path d="M5.2 -6 V6" stroke="#2f7fd6" stroke-width="1.8"/><path d="M3 -4 L5.2 -6.6 L7.4 -4Z M3 4.4 L5.2 7.2 L7.4 4.4Z" fill="#2f7fd6"/></svg>
<div style="left:329px;top:266.5px;width:346.5px;height:213px;border-radius:5px 5px 1px 1px;background:#f0f0f0;border:1px solid #dbe8f6;box-shadow:0 0 0 0.6px rgba(120,170,215,0.9);overflow:hidden;z-index:20;">
<div style="left:-1px;top:-1.0px;width:346.5px;height:21.5px;background:linear-gradient(#95b3dc,#a9c4e6 55%,#b9d1ec);"></div>
<div style="left:-1px;top:20.100000000000023px;width:346.5px;height:1px;background:#c9d9ec;"></div>
<div style="left:343.79999999999995px;top:20.5px;width:1.6px;height:192px;background:#9fd0ee;"></div>
<div style="left:-1px;top:210.7px;width:346.5px;height:1.8px;background:#a9d6f0;"></div>
<svg style="left:3.5px;top:3.0px" width="13" height="14" viewBox="0 0 13 14">
<rect x="1.5" y="2.5" width="9" height="9.5" fill="#ece9df" stroke="#b3b1a8" stroke-width="0.8"/>
<rect x="1" y="1" width="10" height="3.6" rx="1" fill="#b7c54c"/>
<path d="M5 5.5 L11 12" stroke="#44464e" stroke-width="2" stroke-linecap="round"/>
<path d="M4 4.5 L6 6.8" stroke="#9aa0a8" stroke-width="1.8"/>
</svg>
<span class="t" style="left:19.90px;top:3px;font-size:11.5px;line-height:13.5px;color:#141c2c;transform:translateY(0.75px) scaleX(0.9007);will-change:transform;-webkit-text-stroke:0.3px #141c2c;text-shadow:0 0 3px rgba(255,255,255,0.7);">Noise Reduction</span>
<div style="left:314.6px;top:2.6999999999999886px;width:27px;height:14.6px;border-radius:3px;border:1px solid #843a34;background:linear-gradient(#eeb5a8,#dc8876 45%,#c8452e 52%,#d4674e);box-shadow:0 0 0 1px rgba(255,255,255,0.45);"></div>
<svg style="left:322.7px;top:5.6px" width="11" height="9"><path d="M1.8 1.2 L9.2 7.8 M9.2 1.2 L1.8 7.8" stroke="#7a3a36" stroke-width="3.2"/><path d="M1.8 1.2 L9.2 7.8 M9.2 1.2 L1.8 7.8" stroke="#fff" stroke-width="2"/></svg>
<span class="t" style="left:7.70px;top:38px;font-size:10px;line-height:12px;color:#181818;transform:translateY(0.20px) scaleX(0.9885);will-change:transform;-webkit-text-stroke:0.4px #181818;"><u>T</u>hreshold:</span>
<span class="t" style="left:7.70px;top:73px;font-size:10px;line-height:12px;color:#181818;transform:translateY(0.60px) scaleX(1.0251);will-change:transform;-webkit-text-stroke:0.4px #181818;"><u>R</u>ate:</span>
<span class="t" style="left:7.70px;top:108px;font-size:10px;line-height:12px;color:#181818;transform:translateY(0.80px) scaleX(0.9932);will-change:transform;-webkit-text-stroke:0.4px #181818;"><u>R</u>oot-Mean-Square Time:</span>
<span class="t" style="left:7.70px;top:147px;font-size:10px;line-height:12px;color:#181818;transform:translateY(0.40px) scaleX(0.9406);will-change:transform;-webkit-text-stroke:0.4px #181818;"><u>P</u>resets:</span>
<div style="left:127.19999999999999px;top:34.5px;width:35.6px;height:17.8px;background:#fff;border:1px solid #e3e9ef;border-top-color:#b9c0c8;border-left-color:#d5dbe2;"></div>
<div style="left:129.60000000000002px;top:37.10000000000002px;width:15.2px;height:12.8px;background:#3399ff;"></div>
<span class="t" style="left:130.40px;top:37px;font-size:10.5px;line-height:12.5px;color:#fff;transform:translateY(0.45px) scaleX(0.8962);will-change:transform;">-13</span>
<div style="left:127.19999999999999px;top:69.69999999999999px;width:35.6px;height:17.8px;background:#fff;border:1px solid #e3e9ef;border-top-color:#b9c0c8;border-left-color:#d5dbe2;"></div>
<span class="t" style="left:129.80px;top:72px;font-size:10.5px;line-height:12.5px;color:#1a1a1a;transform:translateY(0.65px) scaleX(0.9077);will-change:transform;-webkit-text-stroke:0.4px #181818;">99</span>
<div style="left:127.19999999999999px;top:104.5px;width:35.6px;height:17.8px;background:#fff;border:1px solid #e3e9ef;border-top-color:#b9c0c8;border-left-color:#d5dbe2;"></div>
<span class="t" style="left:129.80px;top:107px;font-size:10.5px;line-height:12.5px;color:#1a1a1a;transform:translateY(0.45px) scaleX(0.9077);will-change:transform;-webkit-text-stroke:0.4px #181818;">55</span>
<div style="left:170.60000000000002px;top:34.60000000000002px;width:160.4px;height:6.3px;border-radius:3px;background:linear-gradient(#6a6a6a,#3e3e3e 35%,#2c2c2c 70%,#3a3a3a);"></div>
<div style="left:283.79999999999995px;top:32.0px;width:16.8px;height:11.6px;border-radius:2px;border:1px solid #4c4c4c;background:linear-gradient(90deg,#4a4a4a 0,#7e7e7e 18%,#a6a6a6 34%,#3c3c3c 37%,#3c3c3c 41%,#c9c9c9 44%,#e2e2e2 60%,#fbfbfb 78%,#bdbdbd 88%,#555 100%);"></div>
<div style="left:170.60000000000002px;top:69.80000000000001px;width:160.4px;height:6.3px;border-radius:3px;background:linear-gradient(#6a6a6a,#3e3e3e 35%,#2c2c2c 70%,#3a3a3a);"></div>
<div style="left:312.79999999999995px;top:67.19999999999999px;width:16.8px;height:11.6px;border-radius:2px;border:1px solid #4c4c4c;background:linear-gradient(90deg,#4a4a4a 0,#7e7e7e 18%,#a6a6a6 34%,#3c3c3c 37%,#3c3c3c 41%,#c9c9c9 44%,#e2e2e2 60%,#fbfbfb 78%,#bdbdbd 88%,#555 100%);"></div>
<div style="left:170.60000000000002px;top:104.89999999999998px;width:160.4px;height:6.3px;border-radius:3px;background:linear-gradient(#6a6a6a,#3e3e3e 35%,#2c2c2c 70%,#3a3a3a);"></div>
<div style="left:179.3px;top:102.29999999999995px;width:16.8px;height:11.6px;border-radius:2px;border:1px solid #4c4c4c;background:linear-gradient(90deg,#4a4a4a 0,#7e7e7e 18%,#a6a6a6 34%,#3c3c3c 37%,#3c3c3c 41%,#c9c9c9 44%,#e2e2e2 60%,#fbfbfb 78%,#bdbdbd 88%,#555 100%);"></div>
<span class="t" style="left:171.00px;top:47px;font-size:10.5px;line-height:12.5px;color:#1c1c1c;transform:translateY(0.45px) scaleX(0.9375);will-change:transform;-webkit-text-stroke:0.35px #1c1c1c;">-96 dB</span>
<span class="t" style="left:306.00px;top:47px;font-size:10.5px;line-height:12.5px;color:#1c1c1c;transform:translateY(0.45px) scaleX(0.9112);will-change:transform;-webkit-text-stroke:0.35px #1c1c1c;">10 dB</span>
<span class="t" style="left:171.00px;top:82px;font-size:10.5px;line-height:12.5px;color:#1c1c1c;transform:translateY(0.45px) scaleX(0.8291);will-change:transform;-webkit-text-stroke:0.35px #1c1c1c;">1 %</span>
<span class="t" style="left:305.00px;top:82px;font-size:10.5px;line-height:12.5px;color:#1c1c1c;transform:translateY(0.45px) scaleX(0.8734);will-change:transform;-webkit-text-stroke:0.35px #1c1c1c;">100 %</span>
<span class="t" style="left:171.00px;top:117px;font-size:10.5px;line-height:12.5px;color:#1c1c1c;transform:translateY(0.45px) scaleX(0.8570);will-change:transform;-webkit-text-stroke:0.35px #1c1c1c;">0 ms</span>
<span class="t" style="left:295.50px;top:117px;font-size:10.5px;line-height:12.5px;color:#1c1c1c;transform:translateY(0.45px) scaleX(0.8815);will-change:transform;-webkit-text-stroke:0.35px #1c1c1c;">1000 ms</span>
<div style="left:127px;top:146.8px;width:204px;height:18.6px;border-radius:3px;border:1px solid #7f7f7f;background:linear-gradient(#f4f4f4,#ebebeb 48%,#dedede 52%,#d2d2d2);box-shadow:inset 0 0 0 1px rgba(255,255,255,0.7);"></div>
<span class="t" style="left:130.60px;top:150px;font-size:10.5px;line-height:12.5px;color:#161616;transform:translateY(0.05px) scaleX(0.9048);will-change:transform;-webkit-text-stroke:0.4px #181818;">Select Preset</span>
<svg style="left:319.3px;top:153.5px" width="9" height="6"><path d="M0.5 0.8 H8 L4.25 5Z" fill="#1a1a1a"/></svg>
<div style="left:7px;top:174.8px;width:324px;height:1px;background:#a3a3a3;"></div>
<div style="left:7px;top:175.8px;width:324px;height:1px;background:#fbfbfb;"></div>
<div style="left:8.300000000000011px;top:184.7px;width:63px;height:20px;border-radius:3px;border:1px solid #7b7b7b;background:linear-gradient(#f5f5f5,#ececec 48%,#dedede 52%,#d1d1d1);box-shadow:inset 0 0 0 1px rgba(255,255,255,0.8);"></div>
<span class="t" style="left:22.80px;top:188px;font-size:10.5px;line-height:12.5px;color:#161616;transform:translateY(0.75px) scaleX(0.9105);will-change:transform;-webkit-text-stroke:0.4px #181818;">Preview</span>
<div style="left:127.80000000000001px;top:184.7px;width:64px;height:20px;border-radius:3px;border:1px solid #3c7fb1;background:linear-gradient(#eef7fd,#e2f1fb 48%,#cfe6f6 52%,#bfdcf0);box-shadow:inset 0 0 0 1.2px #5fd0f4;"></div>
<span class="t" style="left:153.55px;top:188px;font-size:10.5px;line-height:12.5px;color:#161616;transform:translateY(0.75px) scaleX(0.8240);will-change:transform;-webkit-text-stroke:0.4px #181818;">OK</span>
<div style="left:198px;top:184.7px;width:62.5px;height:20px;border-radius:3px;border:1px solid #7b7b7b;background:linear-gradient(#f5f5f5,#ececec 48%,#dedede 52%,#d1d1d1);box-shadow:inset 0 0 0 1px rgba(255,255,255,0.8);"></div>
<span class="t" style="left:214.25px;top:188px;font-size:10.5px;line-height:12.5px;color:#161616;transform:translateY(0.75px) scaleX(0.9179);will-change:transform;-webkit-text-stroke:0.4px #181818;">Cancel</span>
<div style="left:267.79999999999995px;top:183.8px;width:63px;height:20px;border-radius:3px;border:1px solid #7b7b7b;background:linear-gradient(#f5f5f5,#ececec 48%,#dedede 52%,#d1d1d1);box-shadow:inset 0 0 0 1px rgba(255,255,255,0.8);"></div>
<span class="t" style="left:289.05px;top:187px;font-size:10.5px;line-height:12.5px;color:#161616;transform:translateY(0.85px) scaleX(0.9493);will-change:transform;-webkit-text-stroke:0.4px #181818;">Help</span>
</div>
</div></body></html>
